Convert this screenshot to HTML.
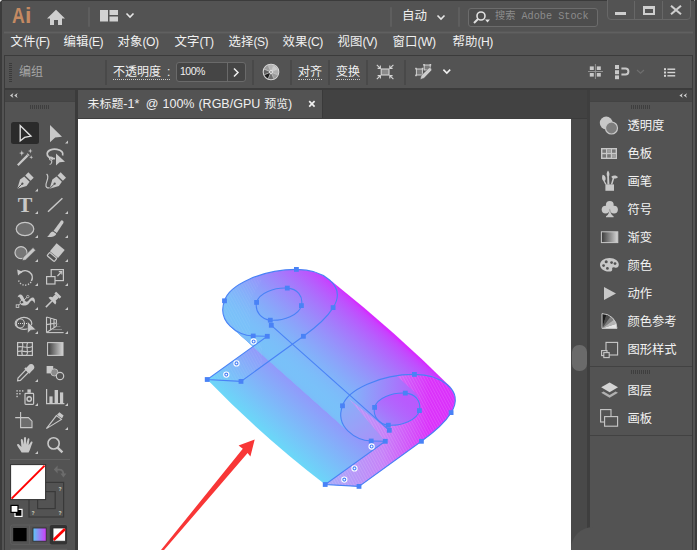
<!DOCTYPE html>
<html lang="zh-CN">
<head>
<meta charset="utf-8">
<title>Adobe Illustrator</title>
<style>
*{box-sizing:border-box;margin:0;padding:0}
html,body{width:697px;height:550px;overflow:hidden;background:#535353}
body{font-family:"Liberation Sans","Noto Sans CJK SC",sans-serif;font-size:12px;color:#e6e6e6;position:relative}
.abs{position:absolute}
#app{position:absolute;left:0;top:0;width:697px;height:550px;background:#535353;overflow:hidden}
.t{position:absolute;white-space:nowrap;line-height:1}
.menu{font-size:12.4px;color:#f0f0f0;top:34px;line-height:16px}
.menu i{font-style:normal;font-size:12.1px;letter-spacing:-0.45px}
.vdiv{position:absolute;width:1px;background:#444}
.dk{position:absolute;background:#3b3b3b}
.pl{position:absolute;left:627.4px;font-size:12.3px;color:#f2f2f2;line-height:15px;white-space:nowrap}
.ul{border-bottom:1px dotted #c8c8c8;height:16px}
</style>
</head>
<body>
<div id="app">
  <!-- window frame -->
  <div class="dk" style="left:0;top:0;width:697px;height:1px"></div>
  <div class="dk" style="left:0;top:0;width:2px;height:550px"></div>
  <div class="dk" style="left:695px;top:0;width:2px;height:550px"></div>
  <div class="abs" style="left:4px;top:32px;width:689px;height:1px;background:#606060"></div><div class="abs" style="left:4px;top:31px;width:689px;height:1px;background:#585858"></div><div class="abs" style="left:4px;top:33px;width:689px;height:1px;background:#585858"></div>

  <div class="abs" style="left:0;top:0;width:2px;height:2px;background:#e8e8e8;clip-path:polygon(0 0,100% 0,0 100%)"></div>
  <div class="abs" style="left:694px;top:0;width:3px;height:3px;background:#f0f0f0;clip-path:polygon(0 0,100% 0,100% 100%)"></div>
  <!-- top bar content -->
  <div class="t" style="left:12.3px;top:4px;font-size:22px;font-weight:bold;color:#c48a62;line-height:24px;transform:scaleX(.8);transform-origin:0 0">A</div>
  <div class="t" style="left:25px;top:4px;font-size:22px;font-weight:bold;color:#c48a62;line-height:24px;transform:scaleX(1.05);transform-origin:0 0">i</div>
  <svg class="abs" style="left:46px;top:9px" width="20" height="17" viewBox="0 0 20 17"><path d="M10 0.8 L1 9.5 H4 V16 H8 V11 H12 V16 H16 V9.5 H19 Z" fill="#cfcfcf"/></svg>
  <div class="vdiv" style="left:88px;top:7px;height:20px;width:2px;background:#5e5e5e;border-radius:1px"></div>
  <svg class="abs" style="left:100px;top:10px" width="18" height="12" viewBox="0 0 18 12"><rect x="0" y="0" width="8" height="11.5" fill="#d2d2d2"/><rect x="9.5" y="0" width="8.5" height="5" fill="#d2d2d2"/><rect x="9.5" y="6.5" width="8.5" height="5" fill="#d2d2d2"/></svg>
  <svg class="abs" style="left:125px;top:12px" width="10" height="7" viewBox="0 0 10 7"><path d="M1.5 1.5 L5 5 L8.5 1.5" stroke="#e6e6e6" stroke-width="1.6" fill="none"/></svg>

  <div class="vdiv" style="left:390px;top:7px;height:20px;width:2px;background:#5e5e5e;border-radius:1px"></div>
  <div class="t" style="left:402px;top:8px;font-size:12.5px;color:#f0f0f0;line-height:16px">自动</div>
  <svg class="abs" style="left:436px;top:14px" width="10" height="7" viewBox="0 0 10 7"><path d="M1.5 1.5 L5 5 L8.5 1.5" stroke="#e6e6e6" stroke-width="1.6" fill="none"/></svg>
  <div class="vdiv" style="left:458px;top:7px;height:20px;width:2px;background:#5e5e5e;border-radius:1px"></div>
  <div class="abs" style="left:468px;top:8px;width:130px;height:19px;border:1px solid #6c6c6c;border-radius:3px;background:#4d4d4d"></div>
  <svg class="abs" style="left:472px;top:10px" width="20" height="15" viewBox="0 0 20 15"><circle cx="9" cy="6" r="4" stroke="#e0e0e0" stroke-width="1.6" fill="none"/><path d="M6 9 L2 13" stroke="#e0e0e0" stroke-width="2"/><path d="M13 9.5 h5 l-2.5 3z" fill="#e0e0e0"/></svg>
  <div class="t" style="left:495px;top:10px;font-family:'Liberation Mono','Noto Sans CJK SC',monospace;font-size:10.2px;color:#8c8c8c;line-height:14px">搜索 Adobe Stock</div>
  <div class="abs" style="left:607px;top:-1px;width:84px;height:21px;border:1px solid #676767;border-radius:0 0 4px 4px;background:#535353"></div>
  <div class="vdiv" style="left:634px;top:1px;height:18px;background:#676767"></div>
  <div class="vdiv" style="left:662px;top:1px;height:18px;background:#676767"></div>
  <div class="abs" style="left:615px;top:12px;width:11px;height:3px;background:#cecece"></div>
  <div class="abs" style="left:643px;top:6px;width:12px;height:9px;border:2px solid #cecece;border-top-width:3px"></div>
  <svg class="abs" style="left:670px;top:5px" width="12" height="10" viewBox="0 0 12 10"><path d="M1 0.8 L11 9.2 M11 0.8 L1 9.2" stroke="#cecece" stroke-width="2.1"/></svg>
  <div class="dk" style="left:695px;top:0;width:2px;height:550px"></div>

  <!-- menu -->
  <div class="t menu" style="left:10.6px">文件<i>(F)</i></div>
  <div class="t menu" style="left:63.6px">编辑<i>(E)</i></div>
  <div class="t menu" style="left:117.6px">对象<i>(O)</i></div>
  <div class="t menu" style="left:174.6px">文字<i>(T)</i></div>
  <div class="t menu" style="left:228.6px">选择<i>(S)</i></div>
  <div class="t menu" style="left:282.6px">效果<i>(C)</i></div>
  <div class="t menu" style="left:337.6px">视图<i>(V)</i></div>
  <div class="t menu" style="left:392.6px">窗口<i>(W)</i></div>
  <div class="t menu" style="left:452.6px">帮助<i>(H)</i></div>

  <!-- control bar -->
  <div class="dk" style="left:4px;top:55px;width:689px;height:1px"></div>
  <div class="dk" style="left:4px;top:55px;width:1px;height:495px"></div>
  <div class="dk" style="left:692px;top:55px;width:1px;height:495px"></div>
  <div class="dk" style="left:4px;top:88px;width:689px;height:2px"></div>
  <div class="abs" style="left:9px;top:63px;width:3px;height:20px;background:repeating-linear-gradient(#3a3a3a 0 1px,transparent 1px 2px)"></div>
  <div class="t" style="left:19px;top:64px;font-size:12px;color:#a6a6a6;line-height:16px">编组</div>
  <div class="vdiv" style="left:105px;top:60px;height:25px;width:2px;background:#494949"></div>
  <div class="t ul" style="left:113px;top:64px;font-size:12px;color:#f0f0f0;line-height:16px">不透明度<span style="margin-left:6px">:</span></div>
  <div class="abs" style="left:176px;top:62px;width:70px;height:20px;border:1px solid #6a6a6a;border-radius:3px;background:#454545"></div>
  <div class="vdiv" style="left:227px;top:63px;height:18px;background:#6a6a6a"></div>
  <div class="t" style="left:180px;top:64px;font-size:10.5px;color:#f0f0f0;line-height:14px;letter-spacing:-0.5px">100%</div>
  <svg class="abs" style="left:232px;top:67px" width="8" height="11" viewBox="0 0 8 11"><path d="M2 1.5 L6 5.5 L2 9.5" stroke="#f0f0f0" stroke-width="1.5" fill="none"/></svg>
  <div class="vdiv" style="left:252px;top:60px;height:25px;width:2px;background:#494949"></div>
  <svg class="abs" style="left:262px;top:63px" width="18" height="18" viewBox="0 0 18 18"><path d="M9.00 9.00L6.17 2.16A7.4 7.4 0 0 1 11.83 2.16Z" fill="#b4b4b4"/><path d="M9.00 9.00L11.83 2.16A7.4 7.4 0 0 1 15.84 6.17Z" fill="#cacaca"/><path d="M9.00 9.00L15.84 6.17A7.4 7.4 0 0 1 15.84 11.83Z" fill="#b0b0b0"/><path d="M9.00 9.00L15.84 11.83A7.4 7.4 0 0 1 11.83 15.84Z" fill="#9c9c9c"/><path d="M9.00 9.00L11.83 15.84A7.4 7.4 0 0 1 6.17 15.84Z" fill="#6e6e6e"/><path d="M9.00 9.00L6.17 15.84A7.4 7.4 0 0 1 2.16 11.83Z" fill="#1e1e1e"/><path d="M9.00 9.00L2.16 11.83A7.4 7.4 0 0 1 2.16 6.17Z" fill="#606060"/><path d="M9.00 9.00L2.16 6.17A7.4 7.4 0 0 1 6.17 2.16Z" fill="#9a9a9a"/><path d="M9.00 9.00L6.17 2.16M9.00 9.00L11.83 2.16M9.00 9.00L15.84 6.17M9.00 9.00L15.84 11.83M9.00 9.00L11.83 15.84M9.00 9.00L6.17 15.84M9.00 9.00L2.16 11.83M9.00 9.00L2.16 6.17" stroke="#d6d6d6" stroke-width="0.7"/><circle cx="9" cy="9" r="7.8" fill="none" stroke="#d6d6d6" stroke-width="1.1"/><circle cx="9" cy="9" r="1.6" fill="#a0a0a0" stroke="#e2e2e2" stroke-width="0.9"/></svg>
  <div class="vdiv" style="left:290px;top:60px;height:25px;width:2px;background:#494949"></div>
  <div class="t ul" style="left:298px;top:64px;font-size:12px;color:#f0f0f0;line-height:16px">对齐</div>
  <div class="vdiv" style="left:328px;top:60px;height:25px;width:2px;background:#494949"></div>
  <div class="t ul" style="left:336px;top:64px;font-size:12px;color:#f0f0f0;line-height:16px">变换</div>
  <div class="vdiv" style="left:366px;top:60px;height:25px;width:2px;background:#494949"></div>
  <div class="vdiv" style="left:404px;top:60px;height:25px;width:2px;background:#494949"></div>
  <!-- isolate icon -->
  <svg class="abs" style="left:374px;top:62px" width="22" height="20" viewBox="374 62 22 20">
    <rect x="381.2" y="69" width="7.8" height="6" fill="#8a8a8a" stroke="#d4d4d4" stroke-width="1.1"/>
    <g stroke="#d4d4d4" stroke-width="1.1" fill="none">
      <path d="M376.8 64.8 L380.4 68.4 M377.6 68.4 H380.4 V65.6"/>
      <path d="M393.4 64.8 L389.8 68.4 M392.6 68.4 H389.8 V65.6"/>
      <path d="M376.8 79.2 L380.4 75.6 M377.6 75.6 H380.4 V78.4"/>
      <path d="M393.4 79.2 L389.8 75.6 M392.6 75.6 H389.8 V78.4"/>
    </g>
  </svg>
  <!-- recolor/pen icon -->
  <svg class="abs" style="left:412px;top:62px" width="24" height="20" viewBox="412 62 24 20">
    <rect x="416.4" y="69" width="6" height="6" fill="#7a7a7a" stroke="#d0d0d0" stroke-width="1"/>
    <rect x="424.2" y="65" width="6" height="5" fill="#7a7a7a" stroke="#d0d0d0" stroke-width="1"/>
    <g fill="#d0d0d0"><rect x="415.2" y="67.8" width="1.6" height="1.6"/><rect x="421.8" y="67.8" width="1.6" height="1.6"/><rect x="415.2" y="74.6" width="1.6" height="1.6"/><rect x="423.2" y="64" width="1.6" height="1.6"/><rect x="429.6" y="64" width="1.6" height="1.6"/></g>
    <path d="M420.2 79.6 L421.2 75.4 L428.6 68.2 C429.4 67.4 430.4 67.6 431 68.2 C431.8 69 431.8 70 431.2 70.8 L424 78.2 Z" fill="#cdcdcd" stroke="#535353" stroke-width="0.5"/>
  </svg>
  <svg class="abs" style="left:442px;top:68px" width="10" height="7" viewBox="0 0 10 7"><path d="M1.4 1.6 L4.8 5 L8.2 1.6" stroke="#f0f0f0" stroke-width="1.6" fill="none"/></svg>
  <!-- right icons -->
  <svg class="abs" style="left:586px;top:62px" width="110" height="20" viewBox="586 62 110 20">
    <g fill="#c8c8c8"><rect x="589.8" y="66.4" width="4" height="3.6"/><rect x="596.8" y="66.4" width="4" height="3.6"/><rect x="589.8" y="73" width="4" height="3.6"/><rect x="596.8" y="73" width="4" height="3.6"/></g>
    <path d="M595.4 64 V79 M588 71.5 H603" stroke="#9a9a9a" stroke-width="0.9"/>
    <g fill="#c8c8c8"><rect x="615" y="65" width="4" height="4"/><rect x="615" y="70.2" width="4" height="4"/><rect x="615" y="75.4" width="4" height="3.8"/></g>
    <path d="M621.4 68.6 H625.4 A3 3 0 0 1 625.4 74.6 H621.4" fill="none" stroke="#c8c8c8" stroke-width="2"/>
    <path d="M637 70 L640.5 73.2 L644 70" stroke="#6e6e6e" stroke-width="1.2" fill="none"/>
    <g fill="#d6d6d6"><rect x="664" y="68.2" width="2" height="2"/><rect x="664" y="71.5" width="2" height="2"/><rect x="664" y="74.8" width="2" height="2"/><rect x="667.4" y="68.5" width="7.8" height="1.4"/><rect x="667.4" y="71.8" width="7.8" height="1.4"/><rect x="667.4" y="75.1" width="7.8" height="1.4"/></g>
  </svg>

  <!-- left panel -->
  <div class="abs" style="left:5px;top:90px;width:71px;height:11px;background:#464646"></div>
  <div class="abs" style="left:5px;top:101px;width:70px;height:1px;background:#434343"></div>
  <div class="dk" style="left:75px;top:90px;width:3px;height:460px"></div>
<svg class="abs" style="left:0;top:89px" width="78" height="461" viewBox="0 89 78 461">
  <g fill="#d0d0d0"><path d="M13.4 93 L10 95.5 L13.4 98 L12.4 95.5Z"/><path d="M17.6 93 L14.2 95.5 L17.6 98 L16.6 95.5Z"/></g>
  <g fill="#3e3e3e"><rect x="30" y="105" width="1" height="4"/><rect x="32" y="105" width="1" height="4"/><rect x="34" y="105" width="1" height="4"/><rect x="36" y="105" width="1" height="4"/><rect x="38" y="105" width="1" height="4"/><rect x="40" y="105" width="1" height="4"/><rect x="42" y="105" width="1" height="4"/><rect x="44" y="105" width="1" height="4"/><rect x="46" y="105" width="1" height="4"/><rect x="48" y="105" width="1" height="4"/></g>
  <!-- corner flyout triangles -->
  <g fill="#c8c8c8">
    <path d="M68 140.5V143.5H65Z"/>
    <path d="M38 188.5V191.5H35Z"/>
    <path d="M38 211V214H35Z"/><path d="M68 211V214H65Z"/>
    <path d="M38 235V238H35Z"/><path d="M68 235V238H65Z"/>
    <path d="M38 259V262H35Z"/><path d="M68 259V262H65Z"/>
    <path d="M38 283V286H35Z"/><path d="M68 283V286H65Z"/>
    <path d="M38 307V310H35Z"/><path d="M68 307V310H65Z"/>
    <path d="M38 331V334H35Z"/><path d="M68 331V334H65Z"/>
    <path d="M38 379V382H35Z"/>
    <path d="M38 403V406H35Z"/><path d="M68 403V406H65Z"/>
    <path d="M68 427V430H65Z"/>
    <path d="M38 451V454H35Z"/>
  </g>
  <!-- row1 -->
  <rect x="11" y="122" width="28" height="22" rx="2.5" fill="#2b2b2b"/>
  <path d="M20.2 125.6 V141 L24.6 137.4 L31 136.2 Z" fill="none" stroke="#e4e4e4" stroke-width="1.3" stroke-linejoin="miter"/>
  <path d="M50 125 V142.3 L55.2 137.6 L62 136.8 Z" fill="#c8c8c8"/>
  <!-- row2 wand -->
  <path d="M17.8 165.2 L27.6 155.4" stroke="#c8c8c8" stroke-width="2.2"/>
  <path d="M27.2 153.6 L29.2 155.6" stroke="#c8c8c8" stroke-width="1.2"/>
  <g fill="#c8c8c8">
    <path d="M21.8 150.3 L22.5 152.4 L24.6 153.1 L22.5 153.8 L21.8 155.9 L21.1 153.8 L19 153.1 L21.1 152.4Z"/>
    <path d="M30.3 148.6 L30.9 150.4 L32.7 151 L30.9 151.6 L30.3 153.4 L29.7 151.6 L27.9 151 L29.7 150.4Z"/>
    <path d="M31.2 155.2 L31.7 156.7 L33.2 157.2 L31.7 157.7 L31.2 159.2 L30.7 157.7 L29.2 157.2 L30.7 156.7Z"/>
  </g>
  <!-- lasso + arrow -->
  <path d="M55 158.5 C50 158.8 46.8 156.5 47.2 153.5 C47.6 150 52.5 148.6 57 149.4 C61.5 150.2 63.6 152.6 62.6 155.5" fill="none" stroke="#c8c8c8" stroke-width="1.7"/>
  <circle cx="51" cy="158.6" r="1.6" fill="none" stroke="#c8c8c8" stroke-width="1.1"/>
  <path d="M51.4 160.2 C52.4 162 51.4 164 49.6 164.6" fill="none" stroke="#c8c8c8" stroke-width="1.1"/>
  <path d="M56 153.4 V165.6 L59.6 162.2 L65 161.8 Z" fill="#c8c8c8"/>
  <!-- row3 pen -->
  <g transform="translate(17.3 188.7) rotate(45)" fill="#c8c8c8">
    <path d="M0 0 L-4.6 -8.5 L-3.8 -13.6 H3.8 L4.6 -8.5Z"/><rect x="-3.8" y="-19.4" width="7.6" height="4.4"/>
    <path d="M0 0 V-6.5" stroke="#535353" stroke-width="0.9"/><circle cx="0" cy="-7.2" r="1.1" fill="#535353"/>
  </g>
  <g transform="translate(49.6 188.7) rotate(45)" fill="#c8c8c8">
    <path d="M0 0 L-4.6 -8.5 L-3.8 -13.6 H3.8 L4.6 -8.5Z"/><rect x="-3.8" y="-19.4" width="7.6" height="4.4"/>
    <path d="M0 0 V-6.5" stroke="#535353" stroke-width="0.9"/><circle cx="0" cy="-7.2" r="1.1" fill="#535353"/>
  </g>
  <path d="M46.6 174 C50.5 177.5 44.8 182.5 46 186.3 C46.6 188.2 48.6 188.4 49.4 187.4" fill="none" stroke="#c8c8c8" stroke-width="1.2"/>
  <!-- row4 T, line -->
  <text x="25" y="212.1" font-family="'Liberation Serif',serif" font-size="20.8" font-weight="bold" fill="#c8c8c8" text-anchor="middle" textLength="14.6" lengthAdjust="spacingAndGlyphs">T</text>
  <path d="M48 211.8 L62.4 198.2" stroke="#c8c8c8" stroke-width="1.5"/>
  <!-- row5 ellipse, brush -->
  <ellipse cx="25" cy="229" rx="8.8" ry="6.6" fill="#6e6e6e" stroke="#c8c8c8" stroke-width="1.2"/>
  <path d="M62.4 220.4 C63.6 220.8 63.8 222 63.2 223.2 L56.8 233 L53.6 230.8 L60.4 221.4 C61 220.6 61.6 220.2 62.4 220.4Z" fill="#c8c8c8"/>
  <path d="M53 231.6 L56.2 233.8 C56 236.2 52 237.6 47 236.8 C49.6 235.6 49.8 232 53 231.6Z" fill="#c8c8c8"/>
  <!-- row6 shaper, eraser -->
  <circle cx="21" cy="252.6" r="6" fill="#777" stroke="#c8c8c8" stroke-width="1.2"/>
  <path d="M22.2 260.6 L23 257.4 L33 247.6 L35.6 250.2 L25.6 260 Z" fill="#c8c8c8" stroke="#535353" stroke-width="0.6"/>
  <g transform="translate(55.5 252.8) rotate(40)">
    <rect x="-5.3" y="-8" width="10.6" height="10.4" fill="#c8c8c8"/>
    <rect x="-4.7" y="3.4" width="9.4" height="4.2" rx="1" fill="none" stroke="#c8c8c8" stroke-width="1.2"/>
  </g>
  <!-- row7 rotate, scale -->
  <path d="M20.4 272.6 A7 7 0 0 1 31.4 281" fill="none" stroke="#c8c8c8" stroke-width="1.5"/>
  <path d="M31 282 A7 7 0 0 1 18.4 280" fill="none" stroke="#c8c8c8" stroke-width="1.5" stroke-dasharray="1.2 1.6"/>
  <path d="M17.2 269.4 L22.6 271.8 L18 275.6 Z" fill="#c8c8c8"/>
  <rect x="51.2" y="269.6" width="12.2" height="11" fill="none" stroke="#c8c8c8" stroke-width="1.2"/>
  <rect x="46.6" y="276.6" width="8.4" height="7.4" fill="#535353" stroke="#c8c8c8" stroke-width="1.2"/>
  <path d="M57.4 276 L61.4 272" stroke="#c8c8c8" stroke-width="1.1"/><path d="M58.8 271.6 H61.8 V274.6" fill="none" stroke="#c8c8c8" stroke-width="1.1"/>
  <!-- row8 width, pin -->
  <path d="M17.7 297.6 C17.6 295.6 19 294.3 20.4 294.4 C22 294.5 22.9 295.8 23.6 297.6 C24.4 299.8 25 301.8 26.4 301.8 C28 301.8 28.8 299.6 30.4 298.4 C31.8 297.3 33.6 297.1 34.4 298.8 C35.2 300.4 35 302.4 34.4 303.4 C33.8 302 33.2 300.6 31.8 300.6 C30.4 300.8 29.6 303 28.2 304.2 C26.8 305.4 24.8 305.6 23.2 305.4 C21.6 305.2 20 304.6 20.2 303 C20.4 301.4 21.4 300.8 20.9 299.6 C20.4 298.4 19.4 297.6 19.2 296.8 C18.8 296.6 18 297 17.7 297.6Z" fill="#c8c8c8"/>
  <path d="M17.6 306 L27.8 296.6" stroke="#c8c8c8" stroke-width="1"/>
  <rect x="16.2" y="304.8" width="2.6" height="2.6" fill="#535353" stroke="#c8c8c8" stroke-width="0.9"/>
  <circle cx="21.8" cy="302.2" r="1.7" fill="#4a4a4a" stroke="#c8c8c8" stroke-width="0.9"/>
  <circle cx="27.8" cy="296.6" r="1.2" fill="#535353" stroke="#c8c8c8" stroke-width="0.8"/>
  <g transform="translate(52.8 300.2) rotate(45)" fill="#c8c8c8">
    <rect x="-3.7" y="-8.4" width="7.4" height="2.6" rx="0.5"/>
    <rect x="-2.4" y="-6" width="4.8" height="4.8"/>
    <path d="M-4.7 1.3 C-4.7 -0.6 -3.4 -1.7 -2.4 -1.7 H2.4 C3.4 -1.7 4.7 -0.6 4.7 1.3Z"/>
    <path d="M0 1.2 V9.8" stroke="#c8c8c8" stroke-width="1.5"/>
  </g>
  <!-- row9 shape builder, perspective grid -->
  <ellipse cx="24" cy="323.4" rx="7.8" ry="6" fill="none" stroke="#c8c8c8" stroke-width="1.2"/>
  <ellipse cx="19.8" cy="323.4" rx="4.6" ry="4.6" fill="none" stroke="#c8c8c8" stroke-width="1.1"/>
  <path d="M18 323.5 H27" stroke="#d8d8d8" stroke-width="1" stroke-dasharray="1 1"/>
  <path d="M27.6 321.6 V333.2 L30.8 330.2 L36 329.8 Z" fill="#c8c8c8" stroke="#535353" stroke-width="0.6"/>
  <path d="M46.5 317 V332.5 M46.5 317 L56.4 319.8 V326.2 L46.5 332.5 M50.6 318.2 V329.9 M54 319.2 V327.7 M46.5 324.6 L56.4 323" fill="none" stroke="#c8c8c8" stroke-width="1.1"/>
  <path d="M46.5 332.6 H63.6" stroke="#c8c8c8" stroke-width="1.1"/>
  <path d="M52.4 329.6 H62" stroke="#8e8e8e" stroke-width="1"/><path d="M56.6 326.6 H60.4 M56.6 324 H58.6" stroke="#7c7c7c" stroke-width="1"/>
  <!-- row10 mesh, gradient -->
  <defs><linearGradient id="gt" x1="0" x2="1" y1="0" y2="0"><stop offset="0" stop-color="#3a3a3a"/><stop offset="1" stop-color="#d6d6d6"/></linearGradient></defs>
  <rect x="17.6" y="342.6" width="14.8" height="12.8" fill="none" stroke="#c8c8c8" stroke-width="1.2"/>
  <path d="M22.4 342.6 C24 346 20.4 351 22.4 355.4 M27.6 342.6 C25 347 29.4 351 26.6 355.4 M17.6 347 C22 345.4 27 349.4 32.4 346.4 M17.6 351.6 C22 349.6 27 353.6 32.4 350.8" fill="none" stroke="#c8c8c8" stroke-width="1.1"/>
  <rect x="47.6" y="342.6" width="15.4" height="12.8" fill="url(#gt)" stroke="#c8c8c8" stroke-width="1.1"/>
  <!-- row11 eyedropper, blend -->
  <path d="M17.6 380.8 L18 378 L26 369.6 L28.6 372.2 L20.4 380.4 Z" fill="none" stroke="#c8c8c8" stroke-width="1.2"/>
  <path d="M25 368 L30 373 M26.2 369.4 L29.4 366 C30.4 364.8 32 364.8 32.8 365.8 C33.6 366.8 33.4 368 32.4 369 L29 372.4" stroke="#c8c8c8" stroke-width="2" fill="#c8c8c8"/>
  <rect x="46.6" y="366" width="6.6" height="7.4" fill="#c8c8c8"/>
  <circle cx="54.4" cy="372.4" r="3.6" fill="#8a8a8a" stroke="#c8c8c8" stroke-width="0.8"/>
  <circle cx="60" cy="376" r="3.7" fill="#535353" stroke="#c8c8c8" stroke-width="1.2"/>
  <!-- row12 sprayer, graph -->
  <rect x="25" y="393.4" width="8.6" height="11" rx="0.8" fill="none" stroke="#c8c8c8" stroke-width="1.2"/>
  <rect x="27.4" y="389.4" width="3.4" height="3.4" fill="#c8c8c8"/>
  <circle cx="29.2" cy="399" r="2.2" fill="none" stroke="#c8c8c8" stroke-width="1.4"/>
  <g fill="#c8c8c8"><rect x="16.4" y="390.2" width="1.4" height="1.4"/><rect x="19.2" y="390.2" width="1.4" height="1.4"/><rect x="22" y="390.2" width="1.4" height="1.4"/><rect x="16.4" y="393" width="1.4" height="1.4"/><rect x="19.2" y="393" width="1.4" height="1.4"/><rect x="16.4" y="395.8" width="1.4" height="1.4"/></g>
  <path d="M46.6 389 V403.6 H64.4" fill="none" stroke="#c8c8c8" stroke-width="1.2"/>
  <g fill="#c8c8c8"><rect x="49.4" y="396.4" width="3.2" height="7"/><rect x="54.6" y="390" width="3.4" height="13.4"/><rect x="60" y="392.4" width="3.2" height="11"/></g>
  <!-- row13 artboard, slice -->
  <path d="M20.6 412 V420 M15.2 417.6 H24" stroke="#c8c8c8" stroke-width="1.1"/>
  <path d="M20.6 417.6 H28.4 L32 421.2 V427.6 H20.6 Z" fill="#6e6e6e" stroke="#c8c8c8" stroke-width="1.1"/>
  <path d="M46.4 428.6 L56.4 415.6 L61.4 419.4 L46.4 428.6Z" fill="none" stroke="#c8c8c8" stroke-width="1.1"/>
  <path d="M57 414.8 L59.4 412.2 L63.6 415.4 L62 418.4 Z" fill="#c8c8c8"/>
  <!-- row14 hand, zoom -->
  <path d="M21.6 452.6 C20.4 450 18.4 447.6 17.2 445.4 C16.6 444.2 18 443.4 19 444.4 L21.4 447 L20.8 440 C20.8 438.8 22.6 438.8 22.8 440 L23.6 444.6 L24 438 C24.2 436.8 26 436.8 26 438 L26.2 444.6 L27.6 439 C28 437.8 29.6 438.2 29.4 439.4 L28.6 445.2 L30.8 442 C31.6 441 33 441.8 32.4 443 C31 446 30.4 449.4 28.6 452.6 Z" fill="#c8c8c8"/>
  <circle cx="53.6" cy="443.4" r="5.6" fill="none" stroke="#c8c8c8" stroke-width="1.6"/>
  <path d="M57.6 447.6 L62.4 452.4" stroke="#c8c8c8" stroke-width="2.4"/>
  <!-- separator -->
  <rect x="10" y="459" width="60" height="1" fill="#626262"/>
  <!-- fill / stroke -->
  <rect x="29" y="482.4" width="34.6" height="34.6" fill="#535353" stroke="#393939" stroke-width="1.2"/>
  <rect x="37.6" y="491.6" width="17.6" height="17" fill="#535353" stroke="#393939" stroke-width="1.2"/>
  <g font-family="'Liberation Sans',sans-serif" font-size="5" font-weight="bold" fill="#d8d8c0"><text x="58.4" y="490.5">?</text><text x="31.6" y="515">?</text><text x="58.4" y="515">?</text></g>
  <rect x="10.6" y="464.6" width="35" height="35" fill="#fff" stroke="#303030" stroke-width="1"/>
  <path d="M11.6 498.6 L44.6 465.6" stroke="#ff0000" stroke-width="2"/>
  <path d="M56 469.6 H59.4 C62.4 469.6 63.4 471.6 63.4 474.4" fill="none" stroke="#6c6c6c" stroke-width="1.8"/>
  <path d="M57.6 465.6 L53.8 469.6 L57.6 473.6 Z M60.4 473.4 L63.4 477.6 L66.4 473.4 Z" fill="#6c6c6c"/>
  <rect x="15" y="509.4" width="7" height="7" fill="#000" stroke="#fff" stroke-width="1.2"/>
  <rect x="11" y="505.4" width="7" height="7" fill="#fff" stroke="#000" stroke-width="1.2"/>
  <!-- mode buttons -->
  <rect x="10.6" y="525" width="56.6" height="19.4" rx="2" fill="#535353" stroke="#5e5e5e" stroke-width="1"/>
  <path d="M29.6 525.4 V544" stroke="#5e5e5e" stroke-width="1"/>
  <rect x="49.8" y="525" width="17.4" height="19.4" rx="2" fill="#333"/>
  <rect x="13.2" y="528" width="13.4" height="13.2" fill="#000"/>
  <defs><linearGradient id="gs" x1="0" x2="1" y1="0" y2="0"><stop offset="0" stop-color="#5cc8f6"/><stop offset="1" stop-color="#cf3cf6"/></linearGradient></defs>
  <rect x="33" y="528" width="13.2" height="13.2" fill="url(#gs)" stroke="#2a2a2a" stroke-width="0.8"/>
  <rect x="53" y="528" width="12.6" height="13.2" fill="#fff" stroke="#2a2a2a" stroke-width="0.8"/>
  <path d="M53.6 540 L65 529" stroke="#ff0000" stroke-width="2.6"/>
  <rect x="10.6" y="548.6" width="56.6" height="2" fill="#5e5e5e"/>
</svg>


  <!-- document area -->
  <div class="abs" style="left:78px;top:90px;width:510px;height:29px;background:#424242"></div>
  <div class="abs" style="left:78px;top:90px;width:245px;height:28px;background:#535353;border-right:1px solid #3a3a3a"></div>
  <div class="t" id="ttl" style="left:87.6px;top:96px;font-size:12.5px;color:#f0f0f0;line-height:16px;word-spacing:0.5px"><span style="font-size:11.9px">未标题</span>-1*<span style="margin-left:2.6px"> </span>@ 100% (RGB/GPU <span style="font-size:11.9px">预览</span>)</div>
  <svg class="abs" style="left:308px;top:100px" width="8" height="8" viewBox="0 0 8 8"><path d="M1.2 1.2 L6.6 6.6 M6.6 1.2 L1.2 6.6" stroke="#f0f0f0" stroke-width="1.7"/></svg>
  <div class="abs" style="left:78px;top:118px;width:493px;height:1px;background:#3f3f3f"></div>
  <div class="abs" style="left:78px;top:119px;width:493px;height:431px;background:#fff"></div>

<svg class="abs" style="left:78px;top:119px" width="493" height="431" viewBox="78 119 493 431">
  <defs>
    <linearGradient id="g9" x1="0" y1="0" x2="1" y2="0">
      <stop offset="0" stop-color="#6cd6f8"/>
      <stop offset="1" stop-color="#d52cff"/>
    </linearGradient>
    <linearGradient id="gh" gradientUnits="userSpaceOnUse" x1="325" y1="0" x2="455" y2="0">
      <stop offset="0" stop-color="#a6acf8"/>
      <stop offset="0.45" stop-color="#c680f8"/>
      <stop offset="0.8" stop-color="#da30fa"/>
      <stop offset="1" stop-color="#da2cfa"/>
    </linearGradient>
    <linearGradient id="gl" gradientUnits="userSpaceOnUse" x1="340" y1="400" x2="385" y2="440">
      <stop offset="0" stop-color="#86b2f8"/>
      <stop offset="1" stop-color="#ac8ef8"/>
    </linearGradient>
    <pattern id="hatch" width="2.6" height="2.6" patternUnits="userSpaceOnUse" patternTransform="rotate(62)">
      <rect x="0" y="0" width="2.6" height="1.1" fill="#fff" opacity="0.13"/>
    </pattern>
    <clipPath id="c0"><path clip-rule="evenodd" d="M267.3 336.3 L253.2 336 C238 335.5 216.5 322 224.5 300.8 C229 285 262 269.4 296.4 269.4 C322 269.4 347 285 333.3 307.4 C327.5 317 315 328 303.4 336.3 L241 381.4 L207.2 379.5 Z M287.3 288.1 C297 288.5 303.5 296 301.4 305.6 C299 315 284 321 270.3 320.2 C262 319.5 254.5 312 256.6 302.4 C259 293 274 287.5 287.3 288.1 Z"/></clipPath>
    <clipPath id="c1"><path clip-rule="evenodd" transform="translate(118.0 105.0)" d="M267.3 336.3 L253.2 336 C238 335.5 216.5 322 224.5 300.8 C229 285 262 269.4 296.4 269.4 C322 269.4 347 285 333.3 307.4 C327.5 317 315 328 303.4 336.3 L241 381.4 L207.2 379.5 Z M287.3 288.1 C297 288.5 303.5 296 301.4 305.6 C299 315 284 321 270.3 320.2 C262 319.5 254.5 312 256.6 302.4 C259 293 274 287.5 287.3 288.1 Z"/></clipPath>
  </defs>
  <g fill="url(#g9)" fill-rule="evenodd">
  <path d="M207.2 379.5 Q262.3 436.4 325.2 484.5 L334 483 L216 378 Z" fill="#6cd6f8"/>
  <path d="M332 281.6 Q394.4 331.2 450.6 387 L445 393 L326 288 Z" fill="#d52cff"/>
<path transform="translate(0.00 0.00)" d="M267.3 336.3 L253.2 336 C238 335.5 216.5 322 224.5 300.8 C229 285 262 269.4 296.4 269.4 C322 269.4 347 285 333.3 307.4 C327.5 317 315 328 303.4 336.3 L241 381.4 L207.2 379.5 Z M287.3 288.1 C297 288.5 303.5 296 301.4 305.6 C299 315 284 321 270.3 320.2 C262 319.5 254.5 312 256.6 302.4 C259 293 274 287.5 287.3 288.1 Z"/>
<path transform="translate(1.00 0.89)" d="M267.3 336.3 L253.2 336 C238 335.5 216.5 322 224.5 300.8 C229 285 262 269.4 296.4 269.4 C322 269.4 347 285 333.3 307.4 C327.5 317 315 328 303.4 336.3 L241 381.4 L207.2 379.5 Z M287.3 288.1 C297 288.5 303.5 296 301.4 305.6 C299 315 284 321 270.3 320.2 C262 319.5 254.5 312 256.6 302.4 C259 293 274 287.5 287.3 288.1 Z"/>
<path transform="translate(2.00 1.78)" d="M267.3 336.3 L253.2 336 C238 335.5 216.5 322 224.5 300.8 C229 285 262 269.4 296.4 269.4 C322 269.4 347 285 333.3 307.4 C327.5 317 315 328 303.4 336.3 L241 381.4 L207.2 379.5 Z M287.3 288.1 C297 288.5 303.5 296 301.4 305.6 C299 315 284 321 270.3 320.2 C262 319.5 254.5 312 256.6 302.4 C259 293 274 287.5 287.3 288.1 Z"/>
<path transform="translate(3.00 2.67)" d="M267.3 336.3 L253.2 336 C238 335.5 216.5 322 224.5 300.8 C229 285 262 269.4 296.4 269.4 C322 269.4 347 285 333.3 307.4 C327.5 317 315 328 303.4 336.3 L241 381.4 L207.2 379.5 Z M287.3 288.1 C297 288.5 303.5 296 301.4 305.6 C299 315 284 321 270.3 320.2 C262 319.5 254.5 312 256.6 302.4 C259 293 274 287.5 287.3 288.1 Z"/>
<path transform="translate(4.00 3.56)" d="M267.3 336.3 L253.2 336 C238 335.5 216.5 322 224.5 300.8 C229 285 262 269.4 296.4 269.4 C322 269.4 347 285 333.3 307.4 C327.5 317 315 328 303.4 336.3 L241 381.4 L207.2 379.5 Z M287.3 288.1 C297 288.5 303.5 296 301.4 305.6 C299 315 284 321 270.3 320.2 C262 319.5 254.5 312 256.6 302.4 C259 293 274 287.5 287.3 288.1 Z"/>
<path transform="translate(5.00 4.45)" d="M267.3 336.3 L253.2 336 C238 335.5 216.5 322 224.5 300.8 C229 285 262 269.4 296.4 269.4 C322 269.4 347 285 333.3 307.4 C327.5 317 315 328 303.4 336.3 L241 381.4 L207.2 379.5 Z M287.3 288.1 C297 288.5 303.5 296 301.4 305.6 C299 315 284 321 270.3 320.2 C262 319.5 254.5 312 256.6 302.4 C259 293 274 287.5 287.3 288.1 Z"/>
<path transform="translate(6.00 5.34)" d="M267.3 336.3 L253.2 336 C238 335.5 216.5 322 224.5 300.8 C229 285 262 269.4 296.4 269.4 C322 269.4 347 285 333.3 307.4 C327.5 317 315 328 303.4 336.3 L241 381.4 L207.2 379.5 Z M287.3 288.1 C297 288.5 303.5 296 301.4 305.6 C299 315 284 321 270.3 320.2 C262 319.5 254.5 312 256.6 302.4 C259 293 274 287.5 287.3 288.1 Z"/>
<path transform="translate(7.00 6.23)" d="M267.3 336.3 L253.2 336 C238 335.5 216.5 322 224.5 300.8 C229 285 262 269.4 296.4 269.4 C322 269.4 347 285 333.3 307.4 C327.5 317 315 328 303.4 336.3 L241 381.4 L207.2 379.5 Z M287.3 288.1 C297 288.5 303.5 296 301.4 305.6 C299 315 284 321 270.3 320.2 C262 319.5 254.5 312 256.6 302.4 C259 293 274 287.5 287.3 288.1 Z"/>
<path transform="translate(8.00 7.12)" d="M267.3 336.3 L253.2 336 C238 335.5 216.5 322 224.5 300.8 C229 285 262 269.4 296.4 269.4 C322 269.4 347 285 333.3 307.4 C327.5 317 315 328 303.4 336.3 L241 381.4 L207.2 379.5 Z M287.3 288.1 C297 288.5 303.5 296 301.4 305.6 C299 315 284 321 270.3 320.2 C262 319.5 254.5 312 256.6 302.4 C259 293 274 287.5 287.3 288.1 Z"/>
<path transform="translate(9.00 8.01)" d="M267.3 336.3 L253.2 336 C238 335.5 216.5 322 224.5 300.8 C229 285 262 269.4 296.4 269.4 C322 269.4 347 285 333.3 307.4 C327.5 317 315 328 303.4 336.3 L241 381.4 L207.2 379.5 Z M287.3 288.1 C297 288.5 303.5 296 301.4 305.6 C299 315 284 321 270.3 320.2 C262 319.5 254.5 312 256.6 302.4 C259 293 274 287.5 287.3 288.1 Z"/>
<path transform="translate(10.00 8.90)" d="M267.3 336.3 L253.2 336 C238 335.5 216.5 322 224.5 300.8 C229 285 262 269.4 296.4 269.4 C322 269.4 347 285 333.3 307.4 C327.5 317 315 328 303.4 336.3 L241 381.4 L207.2 379.5 Z M287.3 288.1 C297 288.5 303.5 296 301.4 305.6 C299 315 284 321 270.3 320.2 C262 319.5 254.5 312 256.6 302.4 C259 293 274 287.5 287.3 288.1 Z"/>
<path transform="translate(11.00 9.79)" d="M267.3 336.3 L253.2 336 C238 335.5 216.5 322 224.5 300.8 C229 285 262 269.4 296.4 269.4 C322 269.4 347 285 333.3 307.4 C327.5 317 315 328 303.4 336.3 L241 381.4 L207.2 379.5 Z M287.3 288.1 C297 288.5 303.5 296 301.4 305.6 C299 315 284 321 270.3 320.2 C262 319.5 254.5 312 256.6 302.4 C259 293 274 287.5 287.3 288.1 Z"/>
<path transform="translate(12.00 10.68)" d="M267.3 336.3 L253.2 336 C238 335.5 216.5 322 224.5 300.8 C229 285 262 269.4 296.4 269.4 C322 269.4 347 285 333.3 307.4 C327.5 317 315 328 303.4 336.3 L241 381.4 L207.2 379.5 Z M287.3 288.1 C297 288.5 303.5 296 301.4 305.6 C299 315 284 321 270.3 320.2 C262 319.5 254.5 312 256.6 302.4 C259 293 274 287.5 287.3 288.1 Z"/>
<path transform="translate(13.00 11.57)" d="M267.3 336.3 L253.2 336 C238 335.5 216.5 322 224.5 300.8 C229 285 262 269.4 296.4 269.4 C322 269.4 347 285 333.3 307.4 C327.5 317 315 328 303.4 336.3 L241 381.4 L207.2 379.5 Z M287.3 288.1 C297 288.5 303.5 296 301.4 305.6 C299 315 284 321 270.3 320.2 C262 319.5 254.5 312 256.6 302.4 C259 293 274 287.5 287.3 288.1 Z"/>
<path transform="translate(14.00 12.46)" d="M267.3 336.3 L253.2 336 C238 335.5 216.5 322 224.5 300.8 C229 285 262 269.4 296.4 269.4 C322 269.4 347 285 333.3 307.4 C327.5 317 315 328 303.4 336.3 L241 381.4 L207.2 379.5 Z M287.3 288.1 C297 288.5 303.5 296 301.4 305.6 C299 315 284 321 270.3 320.2 C262 319.5 254.5 312 256.6 302.4 C259 293 274 287.5 287.3 288.1 Z"/>
<path transform="translate(15.00 13.35)" d="M267.3 336.3 L253.2 336 C238 335.5 216.5 322 224.5 300.8 C229 285 262 269.4 296.4 269.4 C322 269.4 347 285 333.3 307.4 C327.5 317 315 328 303.4 336.3 L241 381.4 L207.2 379.5 Z M287.3 288.1 C297 288.5 303.5 296 301.4 305.6 C299 315 284 321 270.3 320.2 C262 319.5 254.5 312 256.6 302.4 C259 293 274 287.5 287.3 288.1 Z"/>
<path transform="translate(16.00 14.24)" d="M267.3 336.3 L253.2 336 C238 335.5 216.5 322 224.5 300.8 C229 285 262 269.4 296.4 269.4 C322 269.4 347 285 333.3 307.4 C327.5 317 315 328 303.4 336.3 L241 381.4 L207.2 379.5 Z M287.3 288.1 C297 288.5 303.5 296 301.4 305.6 C299 315 284 321 270.3 320.2 C262 319.5 254.5 312 256.6 302.4 C259 293 274 287.5 287.3 288.1 Z"/>
<path transform="translate(17.00 15.13)" d="M267.3 336.3 L253.2 336 C238 335.5 216.5 322 224.5 300.8 C229 285 262 269.4 296.4 269.4 C322 269.4 347 285 333.3 307.4 C327.5 317 315 328 303.4 336.3 L241 381.4 L207.2 379.5 Z M287.3 288.1 C297 288.5 303.5 296 301.4 305.6 C299 315 284 321 270.3 320.2 C262 319.5 254.5 312 256.6 302.4 C259 293 274 287.5 287.3 288.1 Z"/>
<path transform="translate(18.00 16.02)" d="M267.3 336.3 L253.2 336 C238 335.5 216.5 322 224.5 300.8 C229 285 262 269.4 296.4 269.4 C322 269.4 347 285 333.3 307.4 C327.5 317 315 328 303.4 336.3 L241 381.4 L207.2 379.5 Z M287.3 288.1 C297 288.5 303.5 296 301.4 305.6 C299 315 284 321 270.3 320.2 C262 319.5 254.5 312 256.6 302.4 C259 293 274 287.5 287.3 288.1 Z"/>
<path transform="translate(19.00 16.91)" d="M267.3 336.3 L253.2 336 C238 335.5 216.5 322 224.5 300.8 C229 285 262 269.4 296.4 269.4 C322 269.4 347 285 333.3 307.4 C327.5 317 315 328 303.4 336.3 L241 381.4 L207.2 379.5 Z M287.3 288.1 C297 288.5 303.5 296 301.4 305.6 C299 315 284 321 270.3 320.2 C262 319.5 254.5 312 256.6 302.4 C259 293 274 287.5 287.3 288.1 Z"/>
<path transform="translate(20.00 17.80)" d="M267.3 336.3 L253.2 336 C238 335.5 216.5 322 224.5 300.8 C229 285 262 269.4 296.4 269.4 C322 269.4 347 285 333.3 307.4 C327.5 317 315 328 303.4 336.3 L241 381.4 L207.2 379.5 Z M287.3 288.1 C297 288.5 303.5 296 301.4 305.6 C299 315 284 321 270.3 320.2 C262 319.5 254.5 312 256.6 302.4 C259 293 274 287.5 287.3 288.1 Z"/>
<path transform="translate(21.00 18.69)" d="M267.3 336.3 L253.2 336 C238 335.5 216.5 322 224.5 300.8 C229 285 262 269.4 296.4 269.4 C322 269.4 347 285 333.3 307.4 C327.5 317 315 328 303.4 336.3 L241 381.4 L207.2 379.5 Z M287.3 288.1 C297 288.5 303.5 296 301.4 305.6 C299 315 284 321 270.3 320.2 C262 319.5 254.5 312 256.6 302.4 C259 293 274 287.5 287.3 288.1 Z"/>
<path transform="translate(22.00 19.58)" d="M267.3 336.3 L253.2 336 C238 335.5 216.5 322 224.5 300.8 C229 285 262 269.4 296.4 269.4 C322 269.4 347 285 333.3 307.4 C327.5 317 315 328 303.4 336.3 L241 381.4 L207.2 379.5 Z M287.3 288.1 C297 288.5 303.5 296 301.4 305.6 C299 315 284 321 270.3 320.2 C262 319.5 254.5 312 256.6 302.4 C259 293 274 287.5 287.3 288.1 Z"/>
<path transform="translate(23.00 20.47)" d="M267.3 336.3 L253.2 336 C238 335.5 216.5 322 224.5 300.8 C229 285 262 269.4 296.4 269.4 C322 269.4 347 285 333.3 307.4 C327.5 317 315 328 303.4 336.3 L241 381.4 L207.2 379.5 Z M287.3 288.1 C297 288.5 303.5 296 301.4 305.6 C299 315 284 321 270.3 320.2 C262 319.5 254.5 312 256.6 302.4 C259 293 274 287.5 287.3 288.1 Z"/>
<path transform="translate(24.00 21.36)" d="M267.3 336.3 L253.2 336 C238 335.5 216.5 322 224.5 300.8 C229 285 262 269.4 296.4 269.4 C322 269.4 347 285 333.3 307.4 C327.5 317 315 328 303.4 336.3 L241 381.4 L207.2 379.5 Z M287.3 288.1 C297 288.5 303.5 296 301.4 305.6 C299 315 284 321 270.3 320.2 C262 319.5 254.5 312 256.6 302.4 C259 293 274 287.5 287.3 288.1 Z"/>
<path transform="translate(25.00 22.25)" d="M267.3 336.3 L253.2 336 C238 335.5 216.5 322 224.5 300.8 C229 285 262 269.4 296.4 269.4 C322 269.4 347 285 333.3 307.4 C327.5 317 315 328 303.4 336.3 L241 381.4 L207.2 379.5 Z M287.3 288.1 C297 288.5 303.5 296 301.4 305.6 C299 315 284 321 270.3 320.2 C262 319.5 254.5 312 256.6 302.4 C259 293 274 287.5 287.3 288.1 Z"/>
<path transform="translate(26.00 23.14)" d="M267.3 336.3 L253.2 336 C238 335.5 216.5 322 224.5 300.8 C229 285 262 269.4 296.4 269.4 C322 269.4 347 285 333.3 307.4 C327.5 317 315 328 303.4 336.3 L241 381.4 L207.2 379.5 Z M287.3 288.1 C297 288.5 303.5 296 301.4 305.6 C299 315 284 321 270.3 320.2 C262 319.5 254.5 312 256.6 302.4 C259 293 274 287.5 287.3 288.1 Z"/>
<path transform="translate(27.00 24.03)" d="M267.3 336.3 L253.2 336 C238 335.5 216.5 322 224.5 300.8 C229 285 262 269.4 296.4 269.4 C322 269.4 347 285 333.3 307.4 C327.5 317 315 328 303.4 336.3 L241 381.4 L207.2 379.5 Z M287.3 288.1 C297 288.5 303.5 296 301.4 305.6 C299 315 284 321 270.3 320.2 C262 319.5 254.5 312 256.6 302.4 C259 293 274 287.5 287.3 288.1 Z"/>
<path transform="translate(28.00 24.92)" d="M267.3 336.3 L253.2 336 C238 335.5 216.5 322 224.5 300.8 C229 285 262 269.4 296.4 269.4 C322 269.4 347 285 333.3 307.4 C327.5 317 315 328 303.4 336.3 L241 381.4 L207.2 379.5 Z M287.3 288.1 C297 288.5 303.5 296 301.4 305.6 C299 315 284 321 270.3 320.2 C262 319.5 254.5 312 256.6 302.4 C259 293 274 287.5 287.3 288.1 Z"/>
<path transform="translate(29.00 25.81)" d="M267.3 336.3 L253.2 336 C238 335.5 216.5 322 224.5 300.8 C229 285 262 269.4 296.4 269.4 C322 269.4 347 285 333.3 307.4 C327.5 317 315 328 303.4 336.3 L241 381.4 L207.2 379.5 Z M287.3 288.1 C297 288.5 303.5 296 301.4 305.6 C299 315 284 321 270.3 320.2 C262 319.5 254.5 312 256.6 302.4 C259 293 274 287.5 287.3 288.1 Z"/>
<path transform="translate(30.00 26.69)" d="M267.3 336.3 L253.2 336 C238 335.5 216.5 322 224.5 300.8 C229 285 262 269.4 296.4 269.4 C322 269.4 347 285 333.3 307.4 C327.5 317 315 328 303.4 336.3 L241 381.4 L207.2 379.5 Z M287.3 288.1 C297 288.5 303.5 296 301.4 305.6 C299 315 284 321 270.3 320.2 C262 319.5 254.5 312 256.6 302.4 C259 293 274 287.5 287.3 288.1 Z"/>
<path transform="translate(31.00 27.58)" d="M267.3 336.3 L253.2 336 C238 335.5 216.5 322 224.5 300.8 C229 285 262 269.4 296.4 269.4 C322 269.4 347 285 333.3 307.4 C327.5 317 315 328 303.4 336.3 L241 381.4 L207.2 379.5 Z M287.3 288.1 C297 288.5 303.5 296 301.4 305.6 C299 315 284 321 270.3 320.2 C262 319.5 254.5 312 256.6 302.4 C259 293 274 287.5 287.3 288.1 Z"/>
<path transform="translate(32.00 28.47)" d="M267.3 336.3 L253.2 336 C238 335.5 216.5 322 224.5 300.8 C229 285 262 269.4 296.4 269.4 C322 269.4 347 285 333.3 307.4 C327.5 317 315 328 303.4 336.3 L241 381.4 L207.2 379.5 Z M287.3 288.1 C297 288.5 303.5 296 301.4 305.6 C299 315 284 321 270.3 320.2 C262 319.5 254.5 312 256.6 302.4 C259 293 274 287.5 287.3 288.1 Z"/>
<path transform="translate(33.00 29.36)" d="M267.3 336.3 L253.2 336 C238 335.5 216.5 322 224.5 300.8 C229 285 262 269.4 296.4 269.4 C322 269.4 347 285 333.3 307.4 C327.5 317 315 328 303.4 336.3 L241 381.4 L207.2 379.5 Z M287.3 288.1 C297 288.5 303.5 296 301.4 305.6 C299 315 284 321 270.3 320.2 C262 319.5 254.5 312 256.6 302.4 C259 293 274 287.5 287.3 288.1 Z"/>
<path transform="translate(34.00 30.25)" d="M267.3 336.3 L253.2 336 C238 335.5 216.5 322 224.5 300.8 C229 285 262 269.4 296.4 269.4 C322 269.4 347 285 333.3 307.4 C327.5 317 315 328 303.4 336.3 L241 381.4 L207.2 379.5 Z M287.3 288.1 C297 288.5 303.5 296 301.4 305.6 C299 315 284 321 270.3 320.2 C262 319.5 254.5 312 256.6 302.4 C259 293 274 287.5 287.3 288.1 Z"/>
<path transform="translate(35.00 31.14)" d="M267.3 336.3 L253.2 336 C238 335.5 216.5 322 224.5 300.8 C229 285 262 269.4 296.4 269.4 C322 269.4 347 285 333.3 307.4 C327.5 317 315 328 303.4 336.3 L241 381.4 L207.2 379.5 Z M287.3 288.1 C297 288.5 303.5 296 301.4 305.6 C299 315 284 321 270.3 320.2 C262 319.5 254.5 312 256.6 302.4 C259 293 274 287.5 287.3 288.1 Z"/>
<path transform="translate(36.00 32.03)" d="M267.3 336.3 L253.2 336 C238 335.5 216.5 322 224.5 300.8 C229 285 262 269.4 296.4 269.4 C322 269.4 347 285 333.3 307.4 C327.5 317 315 328 303.4 336.3 L241 381.4 L207.2 379.5 Z M287.3 288.1 C297 288.5 303.5 296 301.4 305.6 C299 315 284 321 270.3 320.2 C262 319.5 254.5 312 256.6 302.4 C259 293 274 287.5 287.3 288.1 Z"/>
<path transform="translate(37.00 32.92)" d="M267.3 336.3 L253.2 336 C238 335.5 216.5 322 224.5 300.8 C229 285 262 269.4 296.4 269.4 C322 269.4 347 285 333.3 307.4 C327.5 317 315 328 303.4 336.3 L241 381.4 L207.2 379.5 Z M287.3 288.1 C297 288.5 303.5 296 301.4 305.6 C299 315 284 321 270.3 320.2 C262 319.5 254.5 312 256.6 302.4 C259 293 274 287.5 287.3 288.1 Z"/>
<path transform="translate(38.00 33.81)" d="M267.3 336.3 L253.2 336 C238 335.5 216.5 322 224.5 300.8 C229 285 262 269.4 296.4 269.4 C322 269.4 347 285 333.3 307.4 C327.5 317 315 328 303.4 336.3 L241 381.4 L207.2 379.5 Z M287.3 288.1 C297 288.5 303.5 296 301.4 305.6 C299 315 284 321 270.3 320.2 C262 319.5 254.5 312 256.6 302.4 C259 293 274 287.5 287.3 288.1 Z"/>
<path transform="translate(39.00 34.70)" d="M267.3 336.3 L253.2 336 C238 335.5 216.5 322 224.5 300.8 C229 285 262 269.4 296.4 269.4 C322 269.4 347 285 333.3 307.4 C327.5 317 315 328 303.4 336.3 L241 381.4 L207.2 379.5 Z M287.3 288.1 C297 288.5 303.5 296 301.4 305.6 C299 315 284 321 270.3 320.2 C262 319.5 254.5 312 256.6 302.4 C259 293 274 287.5 287.3 288.1 Z"/>
<path transform="translate(40.00 35.59)" d="M267.3 336.3 L253.2 336 C238 335.5 216.5 322 224.5 300.8 C229 285 262 269.4 296.4 269.4 C322 269.4 347 285 333.3 307.4 C327.5 317 315 328 303.4 336.3 L241 381.4 L207.2 379.5 Z M287.3 288.1 C297 288.5 303.5 296 301.4 305.6 C299 315 284 321 270.3 320.2 C262 319.5 254.5 312 256.6 302.4 C259 293 274 287.5 287.3 288.1 Z"/>
<path transform="translate(41.00 36.48)" d="M267.3 336.3 L253.2 336 C238 335.5 216.5 322 224.5 300.8 C229 285 262 269.4 296.4 269.4 C322 269.4 347 285 333.3 307.4 C327.5 317 315 328 303.4 336.3 L241 381.4 L207.2 379.5 Z M287.3 288.1 C297 288.5 303.5 296 301.4 305.6 C299 315 284 321 270.3 320.2 C262 319.5 254.5 312 256.6 302.4 C259 293 274 287.5 287.3 288.1 Z"/>
<path transform="translate(42.00 37.37)" d="M267.3 336.3 L253.2 336 C238 335.5 216.5 322 224.5 300.8 C229 285 262 269.4 296.4 269.4 C322 269.4 347 285 333.3 307.4 C327.5 317 315 328 303.4 336.3 L241 381.4 L207.2 379.5 Z M287.3 288.1 C297 288.5 303.5 296 301.4 305.6 C299 315 284 321 270.3 320.2 C262 319.5 254.5 312 256.6 302.4 C259 293 274 287.5 287.3 288.1 Z"/>
<path transform="translate(43.00 38.26)" d="M267.3 336.3 L253.2 336 C238 335.5 216.5 322 224.5 300.8 C229 285 262 269.4 296.4 269.4 C322 269.4 347 285 333.3 307.4 C327.5 317 315 328 303.4 336.3 L241 381.4 L207.2 379.5 Z M287.3 288.1 C297 288.5 303.5 296 301.4 305.6 C299 315 284 321 270.3 320.2 C262 319.5 254.5 312 256.6 302.4 C259 293 274 287.5 287.3 288.1 Z"/>
<path transform="translate(44.00 39.15)" d="M267.3 336.3 L253.2 336 C238 335.5 216.5 322 224.5 300.8 C229 285 262 269.4 296.4 269.4 C322 269.4 347 285 333.3 307.4 C327.5 317 315 328 303.4 336.3 L241 381.4 L207.2 379.5 Z M287.3 288.1 C297 288.5 303.5 296 301.4 305.6 C299 315 284 321 270.3 320.2 C262 319.5 254.5 312 256.6 302.4 C259 293 274 287.5 287.3 288.1 Z"/>
<path transform="translate(45.00 40.04)" d="M267.3 336.3 L253.2 336 C238 335.5 216.5 322 224.5 300.8 C229 285 262 269.4 296.4 269.4 C322 269.4 347 285 333.3 307.4 C327.5 317 315 328 303.4 336.3 L241 381.4 L207.2 379.5 Z M287.3 288.1 C297 288.5 303.5 296 301.4 305.6 C299 315 284 321 270.3 320.2 C262 319.5 254.5 312 256.6 302.4 C259 293 274 287.5 287.3 288.1 Z"/>
<path transform="translate(46.00 40.93)" d="M267.3 336.3 L253.2 336 C238 335.5 216.5 322 224.5 300.8 C229 285 262 269.4 296.4 269.4 C322 269.4 347 285 333.3 307.4 C327.5 317 315 328 303.4 336.3 L241 381.4 L207.2 379.5 Z M287.3 288.1 C297 288.5 303.5 296 301.4 305.6 C299 315 284 321 270.3 320.2 C262 319.5 254.5 312 256.6 302.4 C259 293 274 287.5 287.3 288.1 Z"/>
<path transform="translate(47.00 41.82)" d="M267.3 336.3 L253.2 336 C238 335.5 216.5 322 224.5 300.8 C229 285 262 269.4 296.4 269.4 C322 269.4 347 285 333.3 307.4 C327.5 317 315 328 303.4 336.3 L241 381.4 L207.2 379.5 Z M287.3 288.1 C297 288.5 303.5 296 301.4 305.6 C299 315 284 321 270.3 320.2 C262 319.5 254.5 312 256.6 302.4 C259 293 274 287.5 287.3 288.1 Z"/>
<path transform="translate(48.00 42.71)" d="M267.3 336.3 L253.2 336 C238 335.5 216.5 322 224.5 300.8 C229 285 262 269.4 296.4 269.4 C322 269.4 347 285 333.3 307.4 C327.5 317 315 328 303.4 336.3 L241 381.4 L207.2 379.5 Z M287.3 288.1 C297 288.5 303.5 296 301.4 305.6 C299 315 284 321 270.3 320.2 C262 319.5 254.5 312 256.6 302.4 C259 293 274 287.5 287.3 288.1 Z"/>
<path transform="translate(49.00 43.60)" d="M267.3 336.3 L253.2 336 C238 335.5 216.5 322 224.5 300.8 C229 285 262 269.4 296.4 269.4 C322 269.4 347 285 333.3 307.4 C327.5 317 315 328 303.4 336.3 L241 381.4 L207.2 379.5 Z M287.3 288.1 C297 288.5 303.5 296 301.4 305.6 C299 315 284 321 270.3 320.2 C262 319.5 254.5 312 256.6 302.4 C259 293 274 287.5 287.3 288.1 Z"/>
<path transform="translate(50.00 44.49)" d="M267.3 336.3 L253.2 336 C238 335.5 216.5 322 224.5 300.8 C229 285 262 269.4 296.4 269.4 C322 269.4 347 285 333.3 307.4 C327.5 317 315 328 303.4 336.3 L241 381.4 L207.2 379.5 Z M287.3 288.1 C297 288.5 303.5 296 301.4 305.6 C299 315 284 321 270.3 320.2 C262 319.5 254.5 312 256.6 302.4 C259 293 274 287.5 287.3 288.1 Z"/>
<path transform="translate(51.00 45.38)" d="M267.3 336.3 L253.2 336 C238 335.5 216.5 322 224.5 300.8 C229 285 262 269.4 296.4 269.4 C322 269.4 347 285 333.3 307.4 C327.5 317 315 328 303.4 336.3 L241 381.4 L207.2 379.5 Z M287.3 288.1 C297 288.5 303.5 296 301.4 305.6 C299 315 284 321 270.3 320.2 C262 319.5 254.5 312 256.6 302.4 C259 293 274 287.5 287.3 288.1 Z"/>
<path transform="translate(52.00 46.27)" d="M267.3 336.3 L253.2 336 C238 335.5 216.5 322 224.5 300.8 C229 285 262 269.4 296.4 269.4 C322 269.4 347 285 333.3 307.4 C327.5 317 315 328 303.4 336.3 L241 381.4 L207.2 379.5 Z M287.3 288.1 C297 288.5 303.5 296 301.4 305.6 C299 315 284 321 270.3 320.2 C262 319.5 254.5 312 256.6 302.4 C259 293 274 287.5 287.3 288.1 Z"/>
<path transform="translate(53.00 47.16)" d="M267.3 336.3 L253.2 336 C238 335.5 216.5 322 224.5 300.8 C229 285 262 269.4 296.4 269.4 C322 269.4 347 285 333.3 307.4 C327.5 317 315 328 303.4 336.3 L241 381.4 L207.2 379.5 Z M287.3 288.1 C297 288.5 303.5 296 301.4 305.6 C299 315 284 321 270.3 320.2 C262 319.5 254.5 312 256.6 302.4 C259 293 274 287.5 287.3 288.1 Z"/>
<path transform="translate(54.00 48.05)" d="M267.3 336.3 L253.2 336 C238 335.5 216.5 322 224.5 300.8 C229 285 262 269.4 296.4 269.4 C322 269.4 347 285 333.3 307.4 C327.5 317 315 328 303.4 336.3 L241 381.4 L207.2 379.5 Z M287.3 288.1 C297 288.5 303.5 296 301.4 305.6 C299 315 284 321 270.3 320.2 C262 319.5 254.5 312 256.6 302.4 C259 293 274 287.5 287.3 288.1 Z"/>
<path transform="translate(55.00 48.94)" d="M267.3 336.3 L253.2 336 C238 335.5 216.5 322 224.5 300.8 C229 285 262 269.4 296.4 269.4 C322 269.4 347 285 333.3 307.4 C327.5 317 315 328 303.4 336.3 L241 381.4 L207.2 379.5 Z M287.3 288.1 C297 288.5 303.5 296 301.4 305.6 C299 315 284 321 270.3 320.2 C262 319.5 254.5 312 256.6 302.4 C259 293 274 287.5 287.3 288.1 Z"/>
<path transform="translate(56.00 49.83)" d="M267.3 336.3 L253.2 336 C238 335.5 216.5 322 224.5 300.8 C229 285 262 269.4 296.4 269.4 C322 269.4 347 285 333.3 307.4 C327.5 317 315 328 303.4 336.3 L241 381.4 L207.2 379.5 Z M287.3 288.1 C297 288.5 303.5 296 301.4 305.6 C299 315 284 321 270.3 320.2 C262 319.5 254.5 312 256.6 302.4 C259 293 274 287.5 287.3 288.1 Z"/>
<path transform="translate(57.00 50.72)" d="M267.3 336.3 L253.2 336 C238 335.5 216.5 322 224.5 300.8 C229 285 262 269.4 296.4 269.4 C322 269.4 347 285 333.3 307.4 C327.5 317 315 328 303.4 336.3 L241 381.4 L207.2 379.5 Z M287.3 288.1 C297 288.5 303.5 296 301.4 305.6 C299 315 284 321 270.3 320.2 C262 319.5 254.5 312 256.6 302.4 C259 293 274 287.5 287.3 288.1 Z"/>
<path transform="translate(58.00 51.61)" d="M267.3 336.3 L253.2 336 C238 335.5 216.5 322 224.5 300.8 C229 285 262 269.4 296.4 269.4 C322 269.4 347 285 333.3 307.4 C327.5 317 315 328 303.4 336.3 L241 381.4 L207.2 379.5 Z M287.3 288.1 C297 288.5 303.5 296 301.4 305.6 C299 315 284 321 270.3 320.2 C262 319.5 254.5 312 256.6 302.4 C259 293 274 287.5 287.3 288.1 Z"/>
<path transform="translate(59.00 52.50)" d="M267.3 336.3 L253.2 336 C238 335.5 216.5 322 224.5 300.8 C229 285 262 269.4 296.4 269.4 C322 269.4 347 285 333.3 307.4 C327.5 317 315 328 303.4 336.3 L241 381.4 L207.2 379.5 Z M287.3 288.1 C297 288.5 303.5 296 301.4 305.6 C299 315 284 321 270.3 320.2 C262 319.5 254.5 312 256.6 302.4 C259 293 274 287.5 287.3 288.1 Z"/>
<path transform="translate(60.00 53.39)" d="M267.3 336.3 L253.2 336 C238 335.5 216.5 322 224.5 300.8 C229 285 262 269.4 296.4 269.4 C322 269.4 347 285 333.3 307.4 C327.5 317 315 328 303.4 336.3 L241 381.4 L207.2 379.5 Z M287.3 288.1 C297 288.5 303.5 296 301.4 305.6 C299 315 284 321 270.3 320.2 C262 319.5 254.5 312 256.6 302.4 C259 293 274 287.5 287.3 288.1 Z"/>
<path transform="translate(61.00 54.28)" d="M267.3 336.3 L253.2 336 C238 335.5 216.5 322 224.5 300.8 C229 285 262 269.4 296.4 269.4 C322 269.4 347 285 333.3 307.4 C327.5 317 315 328 303.4 336.3 L241 381.4 L207.2 379.5 Z M287.3 288.1 C297 288.5 303.5 296 301.4 305.6 C299 315 284 321 270.3 320.2 C262 319.5 254.5 312 256.6 302.4 C259 293 274 287.5 287.3 288.1 Z"/>
<path transform="translate(62.00 55.17)" d="M267.3 336.3 L253.2 336 C238 335.5 216.5 322 224.5 300.8 C229 285 262 269.4 296.4 269.4 C322 269.4 347 285 333.3 307.4 C327.5 317 315 328 303.4 336.3 L241 381.4 L207.2 379.5 Z M287.3 288.1 C297 288.5 303.5 296 301.4 305.6 C299 315 284 321 270.3 320.2 C262 319.5 254.5 312 256.6 302.4 C259 293 274 287.5 287.3 288.1 Z"/>
<path transform="translate(63.00 56.06)" d="M267.3 336.3 L253.2 336 C238 335.5 216.5 322 224.5 300.8 C229 285 262 269.4 296.4 269.4 C322 269.4 347 285 333.3 307.4 C327.5 317 315 328 303.4 336.3 L241 381.4 L207.2 379.5 Z M287.3 288.1 C297 288.5 303.5 296 301.4 305.6 C299 315 284 321 270.3 320.2 C262 319.5 254.5 312 256.6 302.4 C259 293 274 287.5 287.3 288.1 Z"/>
<path transform="translate(64.00 56.95)" d="M267.3 336.3 L253.2 336 C238 335.5 216.5 322 224.5 300.8 C229 285 262 269.4 296.4 269.4 C322 269.4 347 285 333.3 307.4 C327.5 317 315 328 303.4 336.3 L241 381.4 L207.2 379.5 Z M287.3 288.1 C297 288.5 303.5 296 301.4 305.6 C299 315 284 321 270.3 320.2 C262 319.5 254.5 312 256.6 302.4 C259 293 274 287.5 287.3 288.1 Z"/>
<path transform="translate(65.00 57.84)" d="M267.3 336.3 L253.2 336 C238 335.5 216.5 322 224.5 300.8 C229 285 262 269.4 296.4 269.4 C322 269.4 347 285 333.3 307.4 C327.5 317 315 328 303.4 336.3 L241 381.4 L207.2 379.5 Z M287.3 288.1 C297 288.5 303.5 296 301.4 305.6 C299 315 284 321 270.3 320.2 C262 319.5 254.5 312 256.6 302.4 C259 293 274 287.5 287.3 288.1 Z"/>
<path transform="translate(66.00 58.73)" d="M267.3 336.3 L253.2 336 C238 335.5 216.5 322 224.5 300.8 C229 285 262 269.4 296.4 269.4 C322 269.4 347 285 333.3 307.4 C327.5 317 315 328 303.4 336.3 L241 381.4 L207.2 379.5 Z M287.3 288.1 C297 288.5 303.5 296 301.4 305.6 C299 315 284 321 270.3 320.2 C262 319.5 254.5 312 256.6 302.4 C259 293 274 287.5 287.3 288.1 Z"/>
<path transform="translate(67.00 59.62)" d="M267.3 336.3 L253.2 336 C238 335.5 216.5 322 224.5 300.8 C229 285 262 269.4 296.4 269.4 C322 269.4 347 285 333.3 307.4 C327.5 317 315 328 303.4 336.3 L241 381.4 L207.2 379.5 Z M287.3 288.1 C297 288.5 303.5 296 301.4 305.6 C299 315 284 321 270.3 320.2 C262 319.5 254.5 312 256.6 302.4 C259 293 274 287.5 287.3 288.1 Z"/>
<path transform="translate(68.00 60.51)" d="M267.3 336.3 L253.2 336 C238 335.5 216.5 322 224.5 300.8 C229 285 262 269.4 296.4 269.4 C322 269.4 347 285 333.3 307.4 C327.5 317 315 328 303.4 336.3 L241 381.4 L207.2 379.5 Z M287.3 288.1 C297 288.5 303.5 296 301.4 305.6 C299 315 284 321 270.3 320.2 C262 319.5 254.5 312 256.6 302.4 C259 293 274 287.5 287.3 288.1 Z"/>
<path transform="translate(69.00 61.40)" d="M267.3 336.3 L253.2 336 C238 335.5 216.5 322 224.5 300.8 C229 285 262 269.4 296.4 269.4 C322 269.4 347 285 333.3 307.4 C327.5 317 315 328 303.4 336.3 L241 381.4 L207.2 379.5 Z M287.3 288.1 C297 288.5 303.5 296 301.4 305.6 C299 315 284 321 270.3 320.2 C262 319.5 254.5 312 256.6 302.4 C259 293 274 287.5 287.3 288.1 Z"/>
<path transform="translate(70.00 62.29)" d="M267.3 336.3 L253.2 336 C238 335.5 216.5 322 224.5 300.8 C229 285 262 269.4 296.4 269.4 C322 269.4 347 285 333.3 307.4 C327.5 317 315 328 303.4 336.3 L241 381.4 L207.2 379.5 Z M287.3 288.1 C297 288.5 303.5 296 301.4 305.6 C299 315 284 321 270.3 320.2 C262 319.5 254.5 312 256.6 302.4 C259 293 274 287.5 287.3 288.1 Z"/>
<path transform="translate(71.00 63.18)" d="M267.3 336.3 L253.2 336 C238 335.5 216.5 322 224.5 300.8 C229 285 262 269.4 296.4 269.4 C322 269.4 347 285 333.3 307.4 C327.5 317 315 328 303.4 336.3 L241 381.4 L207.2 379.5 Z M287.3 288.1 C297 288.5 303.5 296 301.4 305.6 C299 315 284 321 270.3 320.2 C262 319.5 254.5 312 256.6 302.4 C259 293 274 287.5 287.3 288.1 Z"/>
<path transform="translate(72.00 64.07)" d="M267.3 336.3 L253.2 336 C238 335.5 216.5 322 224.5 300.8 C229 285 262 269.4 296.4 269.4 C322 269.4 347 285 333.3 307.4 C327.5 317 315 328 303.4 336.3 L241 381.4 L207.2 379.5 Z M287.3 288.1 C297 288.5 303.5 296 301.4 305.6 C299 315 284 321 270.3 320.2 C262 319.5 254.5 312 256.6 302.4 C259 293 274 287.5 287.3 288.1 Z"/>
<path transform="translate(73.00 64.96)" d="M267.3 336.3 L253.2 336 C238 335.5 216.5 322 224.5 300.8 C229 285 262 269.4 296.4 269.4 C322 269.4 347 285 333.3 307.4 C327.5 317 315 328 303.4 336.3 L241 381.4 L207.2 379.5 Z M287.3 288.1 C297 288.5 303.5 296 301.4 305.6 C299 315 284 321 270.3 320.2 C262 319.5 254.5 312 256.6 302.4 C259 293 274 287.5 287.3 288.1 Z"/>
<path transform="translate(74.00 65.85)" d="M267.3 336.3 L253.2 336 C238 335.5 216.5 322 224.5 300.8 C229 285 262 269.4 296.4 269.4 C322 269.4 347 285 333.3 307.4 C327.5 317 315 328 303.4 336.3 L241 381.4 L207.2 379.5 Z M287.3 288.1 C297 288.5 303.5 296 301.4 305.6 C299 315 284 321 270.3 320.2 C262 319.5 254.5 312 256.6 302.4 C259 293 274 287.5 287.3 288.1 Z"/>
<path transform="translate(75.00 66.74)" d="M267.3 336.3 L253.2 336 C238 335.5 216.5 322 224.5 300.8 C229 285 262 269.4 296.4 269.4 C322 269.4 347 285 333.3 307.4 C327.5 317 315 328 303.4 336.3 L241 381.4 L207.2 379.5 Z M287.3 288.1 C297 288.5 303.5 296 301.4 305.6 C299 315 284 321 270.3 320.2 C262 319.5 254.5 312 256.6 302.4 C259 293 274 287.5 287.3 288.1 Z"/>
<path transform="translate(76.00 67.63)" d="M267.3 336.3 L253.2 336 C238 335.5 216.5 322 224.5 300.8 C229 285 262 269.4 296.4 269.4 C322 269.4 347 285 333.3 307.4 C327.5 317 315 328 303.4 336.3 L241 381.4 L207.2 379.5 Z M287.3 288.1 C297 288.5 303.5 296 301.4 305.6 C299 315 284 321 270.3 320.2 C262 319.5 254.5 312 256.6 302.4 C259 293 274 287.5 287.3 288.1 Z"/>
<path transform="translate(77.00 68.52)" d="M267.3 336.3 L253.2 336 C238 335.5 216.5 322 224.5 300.8 C229 285 262 269.4 296.4 269.4 C322 269.4 347 285 333.3 307.4 C327.5 317 315 328 303.4 336.3 L241 381.4 L207.2 379.5 Z M287.3 288.1 C297 288.5 303.5 296 301.4 305.6 C299 315 284 321 270.3 320.2 C262 319.5 254.5 312 256.6 302.4 C259 293 274 287.5 287.3 288.1 Z"/>
<path transform="translate(78.00 69.41)" d="M267.3 336.3 L253.2 336 C238 335.5 216.5 322 224.5 300.8 C229 285 262 269.4 296.4 269.4 C322 269.4 347 285 333.3 307.4 C327.5 317 315 328 303.4 336.3 L241 381.4 L207.2 379.5 Z M287.3 288.1 C297 288.5 303.5 296 301.4 305.6 C299 315 284 321 270.3 320.2 C262 319.5 254.5 312 256.6 302.4 C259 293 274 287.5 287.3 288.1 Z"/>
<path transform="translate(79.00 70.30)" d="M267.3 336.3 L253.2 336 C238 335.5 216.5 322 224.5 300.8 C229 285 262 269.4 296.4 269.4 C322 269.4 347 285 333.3 307.4 C327.5 317 315 328 303.4 336.3 L241 381.4 L207.2 379.5 Z M287.3 288.1 C297 288.5 303.5 296 301.4 305.6 C299 315 284 321 270.3 320.2 C262 319.5 254.5 312 256.6 302.4 C259 293 274 287.5 287.3 288.1 Z"/>
<path transform="translate(80.00 71.19)" d="M267.3 336.3 L253.2 336 C238 335.5 216.5 322 224.5 300.8 C229 285 262 269.4 296.4 269.4 C322 269.4 347 285 333.3 307.4 C327.5 317 315 328 303.4 336.3 L241 381.4 L207.2 379.5 Z M287.3 288.1 C297 288.5 303.5 296 301.4 305.6 C299 315 284 321 270.3 320.2 C262 319.5 254.5 312 256.6 302.4 C259 293 274 287.5 287.3 288.1 Z"/>
<path transform="translate(81.00 72.08)" d="M267.3 336.3 L253.2 336 C238 335.5 216.5 322 224.5 300.8 C229 285 262 269.4 296.4 269.4 C322 269.4 347 285 333.3 307.4 C327.5 317 315 328 303.4 336.3 L241 381.4 L207.2 379.5 Z M287.3 288.1 C297 288.5 303.5 296 301.4 305.6 C299 315 284 321 270.3 320.2 C262 319.5 254.5 312 256.6 302.4 C259 293 274 287.5 287.3 288.1 Z"/>
<path transform="translate(82.00 72.97)" d="M267.3 336.3 L253.2 336 C238 335.5 216.5 322 224.5 300.8 C229 285 262 269.4 296.4 269.4 C322 269.4 347 285 333.3 307.4 C327.5 317 315 328 303.4 336.3 L241 381.4 L207.2 379.5 Z M287.3 288.1 C297 288.5 303.5 296 301.4 305.6 C299 315 284 321 270.3 320.2 C262 319.5 254.5 312 256.6 302.4 C259 293 274 287.5 287.3 288.1 Z"/>
<path transform="translate(83.00 73.86)" d="M267.3 336.3 L253.2 336 C238 335.5 216.5 322 224.5 300.8 C229 285 262 269.4 296.4 269.4 C322 269.4 347 285 333.3 307.4 C327.5 317 315 328 303.4 336.3 L241 381.4 L207.2 379.5 Z M287.3 288.1 C297 288.5 303.5 296 301.4 305.6 C299 315 284 321 270.3 320.2 C262 319.5 254.5 312 256.6 302.4 C259 293 274 287.5 287.3 288.1 Z"/>
<path transform="translate(84.00 74.75)" d="M267.3 336.3 L253.2 336 C238 335.5 216.5 322 224.5 300.8 C229 285 262 269.4 296.4 269.4 C322 269.4 347 285 333.3 307.4 C327.5 317 315 328 303.4 336.3 L241 381.4 L207.2 379.5 Z M287.3 288.1 C297 288.5 303.5 296 301.4 305.6 C299 315 284 321 270.3 320.2 C262 319.5 254.5 312 256.6 302.4 C259 293 274 287.5 287.3 288.1 Z"/>
<path transform="translate(85.00 75.64)" d="M267.3 336.3 L253.2 336 C238 335.5 216.5 322 224.5 300.8 C229 285 262 269.4 296.4 269.4 C322 269.4 347 285 333.3 307.4 C327.5 317 315 328 303.4 336.3 L241 381.4 L207.2 379.5 Z M287.3 288.1 C297 288.5 303.5 296 301.4 305.6 C299 315 284 321 270.3 320.2 C262 319.5 254.5 312 256.6 302.4 C259 293 274 287.5 287.3 288.1 Z"/>
<path transform="translate(86.00 76.53)" d="M267.3 336.3 L253.2 336 C238 335.5 216.5 322 224.5 300.8 C229 285 262 269.4 296.4 269.4 C322 269.4 347 285 333.3 307.4 C327.5 317 315 328 303.4 336.3 L241 381.4 L207.2 379.5 Z M287.3 288.1 C297 288.5 303.5 296 301.4 305.6 C299 315 284 321 270.3 320.2 C262 319.5 254.5 312 256.6 302.4 C259 293 274 287.5 287.3 288.1 Z"/>
<path transform="translate(87.00 77.42)" d="M267.3 336.3 L253.2 336 C238 335.5 216.5 322 224.5 300.8 C229 285 262 269.4 296.4 269.4 C322 269.4 347 285 333.3 307.4 C327.5 317 315 328 303.4 336.3 L241 381.4 L207.2 379.5 Z M287.3 288.1 C297 288.5 303.5 296 301.4 305.6 C299 315 284 321 270.3 320.2 C262 319.5 254.5 312 256.6 302.4 C259 293 274 287.5 287.3 288.1 Z"/>
<path transform="translate(88.00 78.31)" d="M267.3 336.3 L253.2 336 C238 335.5 216.5 322 224.5 300.8 C229 285 262 269.4 296.4 269.4 C322 269.4 347 285 333.3 307.4 C327.5 317 315 328 303.4 336.3 L241 381.4 L207.2 379.5 Z M287.3 288.1 C297 288.5 303.5 296 301.4 305.6 C299 315 284 321 270.3 320.2 C262 319.5 254.5 312 256.6 302.4 C259 293 274 287.5 287.3 288.1 Z"/>
<path transform="translate(89.00 79.19)" d="M267.3 336.3 L253.2 336 C238 335.5 216.5 322 224.5 300.8 C229 285 262 269.4 296.4 269.4 C322 269.4 347 285 333.3 307.4 C327.5 317 315 328 303.4 336.3 L241 381.4 L207.2 379.5 Z M287.3 288.1 C297 288.5 303.5 296 301.4 305.6 C299 315 284 321 270.3 320.2 C262 319.5 254.5 312 256.6 302.4 C259 293 274 287.5 287.3 288.1 Z"/>
<path transform="translate(90.00 80.08)" d="M267.3 336.3 L253.2 336 C238 335.5 216.5 322 224.5 300.8 C229 285 262 269.4 296.4 269.4 C322 269.4 347 285 333.3 307.4 C327.5 317 315 328 303.4 336.3 L241 381.4 L207.2 379.5 Z M287.3 288.1 C297 288.5 303.5 296 301.4 305.6 C299 315 284 321 270.3 320.2 C262 319.5 254.5 312 256.6 302.4 C259 293 274 287.5 287.3 288.1 Z"/>
<path transform="translate(91.00 80.97)" d="M267.3 336.3 L253.2 336 C238 335.5 216.5 322 224.5 300.8 C229 285 262 269.4 296.4 269.4 C322 269.4 347 285 333.3 307.4 C327.5 317 315 328 303.4 336.3 L241 381.4 L207.2 379.5 Z M287.3 288.1 C297 288.5 303.5 296 301.4 305.6 C299 315 284 321 270.3 320.2 C262 319.5 254.5 312 256.6 302.4 C259 293 274 287.5 287.3 288.1 Z"/>
<path transform="translate(92.00 81.86)" d="M267.3 336.3 L253.2 336 C238 335.5 216.5 322 224.5 300.8 C229 285 262 269.4 296.4 269.4 C322 269.4 347 285 333.3 307.4 C327.5 317 315 328 303.4 336.3 L241 381.4 L207.2 379.5 Z M287.3 288.1 C297 288.5 303.5 296 301.4 305.6 C299 315 284 321 270.3 320.2 C262 319.5 254.5 312 256.6 302.4 C259 293 274 287.5 287.3 288.1 Z"/>
<path transform="translate(93.00 82.75)" d="M267.3 336.3 L253.2 336 C238 335.5 216.5 322 224.5 300.8 C229 285 262 269.4 296.4 269.4 C322 269.4 347 285 333.3 307.4 C327.5 317 315 328 303.4 336.3 L241 381.4 L207.2 379.5 Z M287.3 288.1 C297 288.5 303.5 296 301.4 305.6 C299 315 284 321 270.3 320.2 C262 319.5 254.5 312 256.6 302.4 C259 293 274 287.5 287.3 288.1 Z"/>
<path transform="translate(94.00 83.64)" d="M267.3 336.3 L253.2 336 C238 335.5 216.5 322 224.5 300.8 C229 285 262 269.4 296.4 269.4 C322 269.4 347 285 333.3 307.4 C327.5 317 315 328 303.4 336.3 L241 381.4 L207.2 379.5 Z M287.3 288.1 C297 288.5 303.5 296 301.4 305.6 C299 315 284 321 270.3 320.2 C262 319.5 254.5 312 256.6 302.4 C259 293 274 287.5 287.3 288.1 Z"/>
<path transform="translate(95.00 84.53)" d="M267.3 336.3 L253.2 336 C238 335.5 216.5 322 224.5 300.8 C229 285 262 269.4 296.4 269.4 C322 269.4 347 285 333.3 307.4 C327.5 317 315 328 303.4 336.3 L241 381.4 L207.2 379.5 Z M287.3 288.1 C297 288.5 303.5 296 301.4 305.6 C299 315 284 321 270.3 320.2 C262 319.5 254.5 312 256.6 302.4 C259 293 274 287.5 287.3 288.1 Z"/>
<path transform="translate(96.00 85.42)" d="M267.3 336.3 L253.2 336 C238 335.5 216.5 322 224.5 300.8 C229 285 262 269.4 296.4 269.4 C322 269.4 347 285 333.3 307.4 C327.5 317 315 328 303.4 336.3 L241 381.4 L207.2 379.5 Z M287.3 288.1 C297 288.5 303.5 296 301.4 305.6 C299 315 284 321 270.3 320.2 C262 319.5 254.5 312 256.6 302.4 C259 293 274 287.5 287.3 288.1 Z"/>
<path transform="translate(97.00 86.31)" d="M267.3 336.3 L253.2 336 C238 335.5 216.5 322 224.5 300.8 C229 285 262 269.4 296.4 269.4 C322 269.4 347 285 333.3 307.4 C327.5 317 315 328 303.4 336.3 L241 381.4 L207.2 379.5 Z M287.3 288.1 C297 288.5 303.5 296 301.4 305.6 C299 315 284 321 270.3 320.2 C262 319.5 254.5 312 256.6 302.4 C259 293 274 287.5 287.3 288.1 Z"/>
<path transform="translate(98.00 87.20)" d="M267.3 336.3 L253.2 336 C238 335.5 216.5 322 224.5 300.8 C229 285 262 269.4 296.4 269.4 C322 269.4 347 285 333.3 307.4 C327.5 317 315 328 303.4 336.3 L241 381.4 L207.2 379.5 Z M287.3 288.1 C297 288.5 303.5 296 301.4 305.6 C299 315 284 321 270.3 320.2 C262 319.5 254.5 312 256.6 302.4 C259 293 274 287.5 287.3 288.1 Z"/>
<path transform="translate(99.00 88.09)" d="M267.3 336.3 L253.2 336 C238 335.5 216.5 322 224.5 300.8 C229 285 262 269.4 296.4 269.4 C322 269.4 347 285 333.3 307.4 C327.5 317 315 328 303.4 336.3 L241 381.4 L207.2 379.5 Z M287.3 288.1 C297 288.5 303.5 296 301.4 305.6 C299 315 284 321 270.3 320.2 C262 319.5 254.5 312 256.6 302.4 C259 293 274 287.5 287.3 288.1 Z"/>
<path transform="translate(100.00 88.98)" d="M267.3 336.3 L253.2 336 C238 335.5 216.5 322 224.5 300.8 C229 285 262 269.4 296.4 269.4 C322 269.4 347 285 333.3 307.4 C327.5 317 315 328 303.4 336.3 L241 381.4 L207.2 379.5 Z M287.3 288.1 C297 288.5 303.5 296 301.4 305.6 C299 315 284 321 270.3 320.2 C262 319.5 254.5 312 256.6 302.4 C259 293 274 287.5 287.3 288.1 Z"/>
<path transform="translate(101.00 89.87)" d="M267.3 336.3 L253.2 336 C238 335.5 216.5 322 224.5 300.8 C229 285 262 269.4 296.4 269.4 C322 269.4 347 285 333.3 307.4 C327.5 317 315 328 303.4 336.3 L241 381.4 L207.2 379.5 Z M287.3 288.1 C297 288.5 303.5 296 301.4 305.6 C299 315 284 321 270.3 320.2 C262 319.5 254.5 312 256.6 302.4 C259 293 274 287.5 287.3 288.1 Z"/>
<path transform="translate(102.00 90.76)" d="M267.3 336.3 L253.2 336 C238 335.5 216.5 322 224.5 300.8 C229 285 262 269.4 296.4 269.4 C322 269.4 347 285 333.3 307.4 C327.5 317 315 328 303.4 336.3 L241 381.4 L207.2 379.5 Z M287.3 288.1 C297 288.5 303.5 296 301.4 305.6 C299 315 284 321 270.3 320.2 C262 319.5 254.5 312 256.6 302.4 C259 293 274 287.5 287.3 288.1 Z"/>
<path transform="translate(103.00 91.65)" d="M267.3 336.3 L253.2 336 C238 335.5 216.5 322 224.5 300.8 C229 285 262 269.4 296.4 269.4 C322 269.4 347 285 333.3 307.4 C327.5 317 315 328 303.4 336.3 L241 381.4 L207.2 379.5 Z M287.3 288.1 C297 288.5 303.5 296 301.4 305.6 C299 315 284 321 270.3 320.2 C262 319.5 254.5 312 256.6 302.4 C259 293 274 287.5 287.3 288.1 Z"/>
<path transform="translate(104.00 92.54)" d="M267.3 336.3 L253.2 336 C238 335.5 216.5 322 224.5 300.8 C229 285 262 269.4 296.4 269.4 C322 269.4 347 285 333.3 307.4 C327.5 317 315 328 303.4 336.3 L241 381.4 L207.2 379.5 Z M287.3 288.1 C297 288.5 303.5 296 301.4 305.6 C299 315 284 321 270.3 320.2 C262 319.5 254.5 312 256.6 302.4 C259 293 274 287.5 287.3 288.1 Z"/>
<path transform="translate(105.00 93.43)" d="M267.3 336.3 L253.2 336 C238 335.5 216.5 322 224.5 300.8 C229 285 262 269.4 296.4 269.4 C322 269.4 347 285 333.3 307.4 C327.5 317 315 328 303.4 336.3 L241 381.4 L207.2 379.5 Z M287.3 288.1 C297 288.5 303.5 296 301.4 305.6 C299 315 284 321 270.3 320.2 C262 319.5 254.5 312 256.6 302.4 C259 293 274 287.5 287.3 288.1 Z"/>
<path transform="translate(106.00 94.32)" d="M267.3 336.3 L253.2 336 C238 335.5 216.5 322 224.5 300.8 C229 285 262 269.4 296.4 269.4 C322 269.4 347 285 333.3 307.4 C327.5 317 315 328 303.4 336.3 L241 381.4 L207.2 379.5 Z M287.3 288.1 C297 288.5 303.5 296 301.4 305.6 C299 315 284 321 270.3 320.2 C262 319.5 254.5 312 256.6 302.4 C259 293 274 287.5 287.3 288.1 Z"/>
<path transform="translate(107.00 95.21)" d="M267.3 336.3 L253.2 336 C238 335.5 216.5 322 224.5 300.8 C229 285 262 269.4 296.4 269.4 C322 269.4 347 285 333.3 307.4 C327.5 317 315 328 303.4 336.3 L241 381.4 L207.2 379.5 Z M287.3 288.1 C297 288.5 303.5 296 301.4 305.6 C299 315 284 321 270.3 320.2 C262 319.5 254.5 312 256.6 302.4 C259 293 274 287.5 287.3 288.1 Z"/>
<path transform="translate(108.00 96.10)" d="M267.3 336.3 L253.2 336 C238 335.5 216.5 322 224.5 300.8 C229 285 262 269.4 296.4 269.4 C322 269.4 347 285 333.3 307.4 C327.5 317 315 328 303.4 336.3 L241 381.4 L207.2 379.5 Z M287.3 288.1 C297 288.5 303.5 296 301.4 305.6 C299 315 284 321 270.3 320.2 C262 319.5 254.5 312 256.6 302.4 C259 293 274 287.5 287.3 288.1 Z"/>
<path transform="translate(109.00 96.99)" d="M267.3 336.3 L253.2 336 C238 335.5 216.5 322 224.5 300.8 C229 285 262 269.4 296.4 269.4 C322 269.4 347 285 333.3 307.4 C327.5 317 315 328 303.4 336.3 L241 381.4 L207.2 379.5 Z M287.3 288.1 C297 288.5 303.5 296 301.4 305.6 C299 315 284 321 270.3 320.2 C262 319.5 254.5 312 256.6 302.4 C259 293 274 287.5 287.3 288.1 Z"/>
<path transform="translate(110.00 97.88)" d="M267.3 336.3 L253.2 336 C238 335.5 216.5 322 224.5 300.8 C229 285 262 269.4 296.4 269.4 C322 269.4 347 285 333.3 307.4 C327.5 317 315 328 303.4 336.3 L241 381.4 L207.2 379.5 Z M287.3 288.1 C297 288.5 303.5 296 301.4 305.6 C299 315 284 321 270.3 320.2 C262 319.5 254.5 312 256.6 302.4 C259 293 274 287.5 287.3 288.1 Z"/>
<path transform="translate(111.00 98.77)" d="M267.3 336.3 L253.2 336 C238 335.5 216.5 322 224.5 300.8 C229 285 262 269.4 296.4 269.4 C322 269.4 347 285 333.3 307.4 C327.5 317 315 328 303.4 336.3 L241 381.4 L207.2 379.5 Z M287.3 288.1 C297 288.5 303.5 296 301.4 305.6 C299 315 284 321 270.3 320.2 C262 319.5 254.5 312 256.6 302.4 C259 293 274 287.5 287.3 288.1 Z"/>
<path transform="translate(112.00 99.66)" d="M267.3 336.3 L253.2 336 C238 335.5 216.5 322 224.5 300.8 C229 285 262 269.4 296.4 269.4 C322 269.4 347 285 333.3 307.4 C327.5 317 315 328 303.4 336.3 L241 381.4 L207.2 379.5 Z M287.3 288.1 C297 288.5 303.5 296 301.4 305.6 C299 315 284 321 270.3 320.2 C262 319.5 254.5 312 256.6 302.4 C259 293 274 287.5 287.3 288.1 Z"/>
<path transform="translate(113.00 100.55)" d="M267.3 336.3 L253.2 336 C238 335.5 216.5 322 224.5 300.8 C229 285 262 269.4 296.4 269.4 C322 269.4 347 285 333.3 307.4 C327.5 317 315 328 303.4 336.3 L241 381.4 L207.2 379.5 Z M287.3 288.1 C297 288.5 303.5 296 301.4 305.6 C299 315 284 321 270.3 320.2 C262 319.5 254.5 312 256.6 302.4 C259 293 274 287.5 287.3 288.1 Z"/>
<path transform="translate(114.00 101.44)" d="M267.3 336.3 L253.2 336 C238 335.5 216.5 322 224.5 300.8 C229 285 262 269.4 296.4 269.4 C322 269.4 347 285 333.3 307.4 C327.5 317 315 328 303.4 336.3 L241 381.4 L207.2 379.5 Z M287.3 288.1 C297 288.5 303.5 296 301.4 305.6 C299 315 284 321 270.3 320.2 C262 319.5 254.5 312 256.6 302.4 C259 293 274 287.5 287.3 288.1 Z"/>
<path transform="translate(115.00 102.33)" d="M267.3 336.3 L253.2 336 C238 335.5 216.5 322 224.5 300.8 C229 285 262 269.4 296.4 269.4 C322 269.4 347 285 333.3 307.4 C327.5 317 315 328 303.4 336.3 L241 381.4 L207.2 379.5 Z M287.3 288.1 C297 288.5 303.5 296 301.4 305.6 C299 315 284 321 270.3 320.2 C262 319.5 254.5 312 256.6 302.4 C259 293 274 287.5 287.3 288.1 Z"/>
<path transform="translate(116.00 103.22)" d="M267.3 336.3 L253.2 336 C238 335.5 216.5 322 224.5 300.8 C229 285 262 269.4 296.4 269.4 C322 269.4 347 285 333.3 307.4 C327.5 317 315 328 303.4 336.3 L241 381.4 L207.2 379.5 Z M287.3 288.1 C297 288.5 303.5 296 301.4 305.6 C299 315 284 321 270.3 320.2 C262 319.5 254.5 312 256.6 302.4 C259 293 274 287.5 287.3 288.1 Z"/>
<path transform="translate(117.00 104.11)" d="M267.3 336.3 L253.2 336 C238 335.5 216.5 322 224.5 300.8 C229 285 262 269.4 296.4 269.4 C322 269.4 347 285 333.3 307.4 C327.5 317 315 328 303.4 336.3 L241 381.4 L207.2 379.5 Z M287.3 288.1 C297 288.5 303.5 296 301.4 305.6 C299 315 284 321 270.3 320.2 C262 319.5 254.5 312 256.6 302.4 C259 293 274 287.5 287.3 288.1 Z"/>
<path transform="translate(118.00 105.00)" d="M267.3 336.3 L253.2 336 C238 335.5 216.5 322 224.5 300.8 C229 285 262 269.4 296.4 269.4 C322 269.4 347 285 333.3 307.4 C327.5 317 315 328 303.4 336.3 L241 381.4 L207.2 379.5 Z M287.3 288.1 C297 288.5 303.5 296 301.4 305.6 C299 315 284 321 270.3 320.2 C262 319.5 254.5 312 256.6 302.4 C259 293 274 287.5 287.3 288.1 Z"/>
  </g>
  <g clip-path="url(#c1)">
    <polygon points="349,399 385,441 371,441 330,441 330,395" fill="url(#gl)"/>
    <polygon points="349,399 388,430 418.8,396 396.8,376 396.8,355 475,355 475,500 315,500 315,470 385,441" fill="url(#gh)"/>
    <polygon points="349,399 388,430 418.8,396 396.8,376 396.8,355 475,355 475,500 315,500 315,470 385,441" fill="url(#hatch)"/>
  </g>
  <g clip-path="url(#c0)">
    <polygon points="215,280 262,280 250,300 250,330 262,345 262,390 200,390" fill="url(#hatch)" opacity="0.4"/>
  </g>
  <g fill="none" stroke="#4982f6" stroke-width="1.1">
    <path d="M267.3 336.3 L253.2 336 C238 335.5 216.5 322 224.5 300.8 C229 285 262 269.4 296.4 269.4 C322 269.4 347 285 333.3 307.4 C327.5 317 315 328 303.4 336.3 L241 381.4 L207.2 379.5 Z M287.3 288.1 C297 288.5 303.5 296 301.4 305.6 C299 315 284 321 270.3 320.2 C262 319.5 254.5 312 256.6 302.4 C259 293 274 287.5 287.3 288.1 Z"/>
    <path transform="translate(118.0 105.0)" d="M267.3 336.3 L253.2 336 C238 335.5 216.5 322 224.5 300.8 C229 285 262 269.4 296.4 269.4 C322 269.4 347 285 333.3 307.4 C327.5 317 315 328 303.4 336.3 L241 381.4 L207.2 379.5 Z M287.3 288.1 C297 288.5 303.5 296 301.4 305.6 C299 315 284 321 270.3 320.2 C262 319.5 254.5 312 256.6 302.4 C259 293 274 287.5 287.3 288.1 Z"/>
    <path d="M271.3 325.3 L389.3 430.3"/>
  </g>
  <g fill="#4982f6"><rect x="294.0" y="267.0" width="4.8" height="4.8"/><rect x="412.0" y="372.0" width="4.8" height="4.8"/><rect x="222.1" y="298.4" width="4.8" height="4.8"/><rect x="340.1" y="403.4" width="4.8" height="4.8"/><rect x="330.7" y="305.2" width="4.8" height="4.8"/><rect x="448.7" y="410.2" width="4.8" height="4.8"/><rect x="301.0" y="333.9" width="4.8" height="4.8"/><rect x="419.0" y="438.9" width="4.8" height="4.8"/><rect x="264.9" y="333.9" width="4.8" height="4.8"/><rect x="382.9" y="438.9" width="4.8" height="4.8"/><rect x="250.8" y="333.6" width="4.8" height="4.8"/><rect x="368.8" y="438.6" width="4.8" height="4.8"/><rect x="204.8" y="377.1" width="4.8" height="4.8"/><rect x="322.8" y="482.1" width="4.8" height="4.8"/><rect x="238.6" y="379.0" width="4.8" height="4.8"/><rect x="356.6" y="484.0" width="4.8" height="4.8"/><rect x="284.9" y="285.7" width="4.8" height="4.8"/><rect x="402.9" y="390.7" width="4.8" height="4.8"/><rect x="254.2" y="300.0" width="4.8" height="4.8"/><rect x="372.2" y="405.0" width="4.8" height="4.8"/><rect x="299.0" y="303.2" width="4.8" height="4.8"/><rect x="417.0" y="408.2" width="4.8" height="4.8"/><rect x="267.9" y="317.8" width="4.8" height="4.8"/><rect x="385.9" y="422.8" width="4.8" height="4.8"/><rect x="268.9" y="322.9" width="4.8" height="4.8"/><rect x="386.9" y="427.9" width="4.8" height="4.8"/></g>
  <g><circle cx="253.6" cy="341.5" r="2.6" fill="#4982f6" stroke="#fff" stroke-width="1.1"/><circle cx="253.6" cy="341.5" r="0.9" fill="#fff"/><circle cx="371.6" cy="446.5" r="2.6" fill="#4982f6" stroke="#fff" stroke-width="1.1"/><circle cx="371.6" cy="446.5" r="0.9" fill="#fff"/><circle cx="236.5" cy="363.4" r="2.6" fill="#4982f6" stroke="#fff" stroke-width="1.1"/><circle cx="236.5" cy="363.4" r="0.9" fill="#fff"/><circle cx="354.5" cy="468.4" r="2.6" fill="#4982f6" stroke="#fff" stroke-width="1.1"/><circle cx="354.5" cy="468.4" r="0.9" fill="#fff"/><circle cx="226.3" cy="374.6" r="2.6" fill="#4982f6" stroke="#fff" stroke-width="1.1"/><circle cx="226.3" cy="374.6" r="0.9" fill="#fff"/><circle cx="344.3" cy="479.6" r="2.6" fill="#4982f6" stroke="#fff" stroke-width="1.1"/><circle cx="344.3" cy="479.6" r="0.9" fill="#fff"/></g>
  <polygon points="254.7,439.4 250.4,456.6 247.6,453.1 163.2,551 160.2,551 242.8,448.8 238.6,445.5" fill="#f83636"/>
</svg>

  <div class="abs" style="left:571px;top:118px;width:16px;height:432px;background:#494949"></div>
  <div class="abs" style="left:571px;top:118px;width:16px;height:1px;background:#3b3b3b"></div>
  <div class="abs" style="left:572px;top:345px;width:15px;height:26px;background:#6a6a6a;border-radius:7px"></div>
  <div class="dk" style="left:587px;top:90px;width:3px;height:460px;background:#3e3e3e"></div>
  <div class="abs" style="left:571px;top:527px;width:40px;height:40px;background:#535353;border-top-left-radius:22px"></div>

  <!-- right panel -->
  <div class="abs" style="left:590px;top:90px;width:102px;height:11px;background:#464646"></div>
  <div class="abs" style="left:590px;top:101px;width:102px;height:1px;background:#434343"></div>
  <div class="abs" style="left:590px;top:366px;width:102px;height:1px;background:#424242"></div>
  <div class="abs" style="left:590px;top:435px;width:102px;height:1px;background:#424242"></div>
<svg class="abs" style="left:589px;top:89px" width="104" height="350" viewBox="589 89 104 350">
  <g fill="#d0d0d0"><path d="M682.8 93.2 L679.4 95.5 L682.8 97.8 L681.8 95.5Z"/><path d="M687 93.2 L683.6 95.5 L687 97.8 L686 95.5Z"/></g>
  <g fill="#3e3e3e"><rect x="631" y="105" width="1" height="4"/><rect x="633" y="105" width="1" height="4"/><rect x="635" y="105" width="1" height="4"/><rect x="637" y="105" width="1" height="4"/><rect x="639" y="105" width="1" height="4"/><rect x="641" y="105" width="1" height="4"/><rect x="643" y="105" width="1" height="4"/><rect x="645" y="105" width="1" height="4"/><rect x="647" y="105" width="1" height="4"/><rect x="649" y="105" width="1" height="4"/></g>
  <g fill="#3e3e3e"><rect x="631" y="370" width="1" height="4"/><rect x="633" y="370" width="1" height="4"/><rect x="635" y="370" width="1" height="4"/><rect x="637" y="370" width="1" height="4"/><rect x="639" y="370" width="1" height="4"/><rect x="641" y="370" width="1" height="4"/><rect x="643" y="370" width="1" height="4"/><rect x="645" y="370" width="1" height="4"/><rect x="647" y="370" width="1" height="4"/><rect x="649" y="370" width="1" height="4"/></g>
  <!-- transparency -->
  <circle cx="606.2" cy="123" r="6.4" fill="#c8c8c8"/>
  <circle cx="611.5" cy="128" r="6" fill="#7e7e7e" stroke="#c8c8c8" stroke-width="1.2"/>
  <!-- swatches -->
  <rect x="601" y="148" width="16" height="11" fill="#c8c8c8"/>
  <g fill="#777"><rect x="602.4" y="149.4" width="3.6" height="3.4"/><rect x="607.2" y="149.4" width="3.6" height="3.4"/><rect x="612" y="149.4" width="3.6" height="3.4"/><rect x="602.4" y="154.2" width="3.6" height="3.4"/><rect x="607.2" y="154.2" width="3.6" height="3.4"/><rect x="612" y="154.2" width="3.6" height="3.4"/></g>
  <rect x="607.2" y="149.4" width="3.6" height="3.4" fill="#a0a0a0"/><rect x="612" y="154.2" width="3.6" height="3.4" fill="#a0a0a0"/>
  <!-- brushes -->
  <rect x="605.4" y="184.4" width="8.6" height="6.4" fill="#c8c8c8"/>
  <path d="M608 170.6 C609.6 172.4 609.8 174.8 609 176.4 L609.4 184.4 H607.4 L607.2 176.4 C606.4 174.8 606.4 172.4 608 170.6Z" fill="#c8c8c8"/>
  <path d="M602.6 174.8 C605 175.2 606 177.4 605.6 179.4 C605.4 180.2 605 180.6 604.6 180.8 L606.8 184.4 L605.2 184.6 L603.4 181 C601.8 180 601.8 177 602.6 174.8Z" fill="#c8c8c8"/>
  <path d="M611.4 176.6 C613.4 174.8 616.6 175 618 177.2 C617 178.2 615.4 178.6 614.2 178.4 L612.4 184.4 L610.8 184.4 L612.6 178.4 C611.8 178 611.4 177.4 611.4 176.6Z" fill="#c8c8c8"/>
  <!-- symbols (club) -->
  <circle cx="609.8" cy="205" r="3.9" fill="#c8c8c8"/><circle cx="605.6" cy="209.6" r="3.9" fill="#c8c8c8"/><circle cx="614" cy="209.6" r="3.9" fill="#c8c8c8"/>
  <path d="M609.8 207 C610 212 611 215 613.6 216.2 V217.2 H606 V216.2 C608.6 215 609.6 212 609.8 207Z" fill="#c8c8c8"/>
  <!-- gradient -->
  <rect x="601.4" y="231.8" width="16.4" height="10.8" fill="url(#gt)" stroke="#c8c8c8" stroke-width="1"/>
  <!-- color palette -->
  <path d="M609.6 258 C615 258 618.8 261 618.8 264.6 C618.8 267.6 616.4 268.2 614.6 267.4 C613 266.8 611.8 267.6 612.2 269 C612.6 270.6 611.4 271.6 609 271.6 C603.6 271.6 600 268.4 600 264.8 C600 261 604 258 609.6 258Z" fill="#c8c8c8"/>
  <g fill="#535353"><circle cx="603.6" cy="265.6" r="1.4"/><circle cx="607.4" cy="268.4" r="1.4"/><circle cx="611.6" cy="262.6" r="1.4"/><circle cx="615" cy="263.6" r="1.4"/><circle cx="606.2" cy="261.8" r="1.5"/></g>
  <!-- actions -->
  <path d="M604 287 L616 293.6 L604 300 Z" fill="#c8c8c8"/>
  <!-- color guide -->
  <defs><linearGradient id="gq" x1="0" x2="1" y1="0" y2="1"><stop offset="0" stop-color="#2e2e2e"/><stop offset="1" stop-color="#e8e8e8"/></linearGradient></defs>
  <path d="M602.0 328.4L602.00 313.40A15 15 0 0 1 606.64 314.13Z" fill="#1c1c1c"/><path d="M602.0 328.4L606.64 314.13A15 15 0 0 1 610.82 316.26Z" fill="#4c4c4c"/><path d="M602.0 328.4L610.82 316.26A15 15 0 0 1 614.14 319.58Z" fill="#808080"/><path d="M602.0 328.4L614.14 319.58A15 15 0 0 1 616.27 323.76Z" fill="#b4b4b4"/><path d="M602.0 328.4L616.27 323.76A15 15 0 0 1 617.00 328.40Z" fill="#e6e6e6"/><path d="M602 313.6 A15 15 0 0 1 617 328.4 H602Z" fill="none" stroke="#c8c8c8" stroke-width="1"/>
  <!-- graphic styles -->
  <rect x="606" y="342.4" width="11.6" height="12.6" fill="#535353" stroke="#c8c8c8" stroke-width="1.1"/>
  <rect x="601.6" y="350.6" width="5.4" height="5" fill="#535353" stroke="#c8c8c8" stroke-width="1.1"/>
  <rect x="603.8" y="352.6" width="5.4" height="5" fill="#535353" stroke="#c8c8c8" stroke-width="1.1"/>
  <!-- layers -->
  <path d="M609.6 382.4 L618 387.2 L609.6 392.2 L601.2 387.2 Z" fill="#d4d4d4"/>
  <path d="M603.6 391.4 L601.2 392.8 L609.6 397.8 L618 392.8 L615.6 391.4 L609.6 395 Z" fill="#b0b0b0"/>
  <!-- artboards -->
  <rect x="600.6" y="409.6" width="10.4" height="12.4" fill="none" stroke="#c8c8c8" stroke-width="1.1"/>
  <rect x="604.6" y="416.6" width="13" height="9.6" fill="#535353" stroke="#c8c8c8" stroke-width="1.1"/>
</svg>

  <div class="pl" style="top:119px">透明度</div>
  <div class="pl" style="top:147px">色板</div>
  <div class="pl" style="top:175px">画笔</div>
  <div class="pl" style="top:203px">符号</div>
  <div class="pl" style="top:231px">渐变</div>
  <div class="pl" style="top:259px">颜色</div>
  <div class="pl" style="top:287px">动作</div>
  <div class="pl" style="top:315px">颜色参考</div>
  <div class="pl" style="top:343px">图形样式</div>
  <div class="pl" style="top:384px">图层</div>
  <div class="pl" style="top:412px">画板</div>
</div>
</body>
</html>
